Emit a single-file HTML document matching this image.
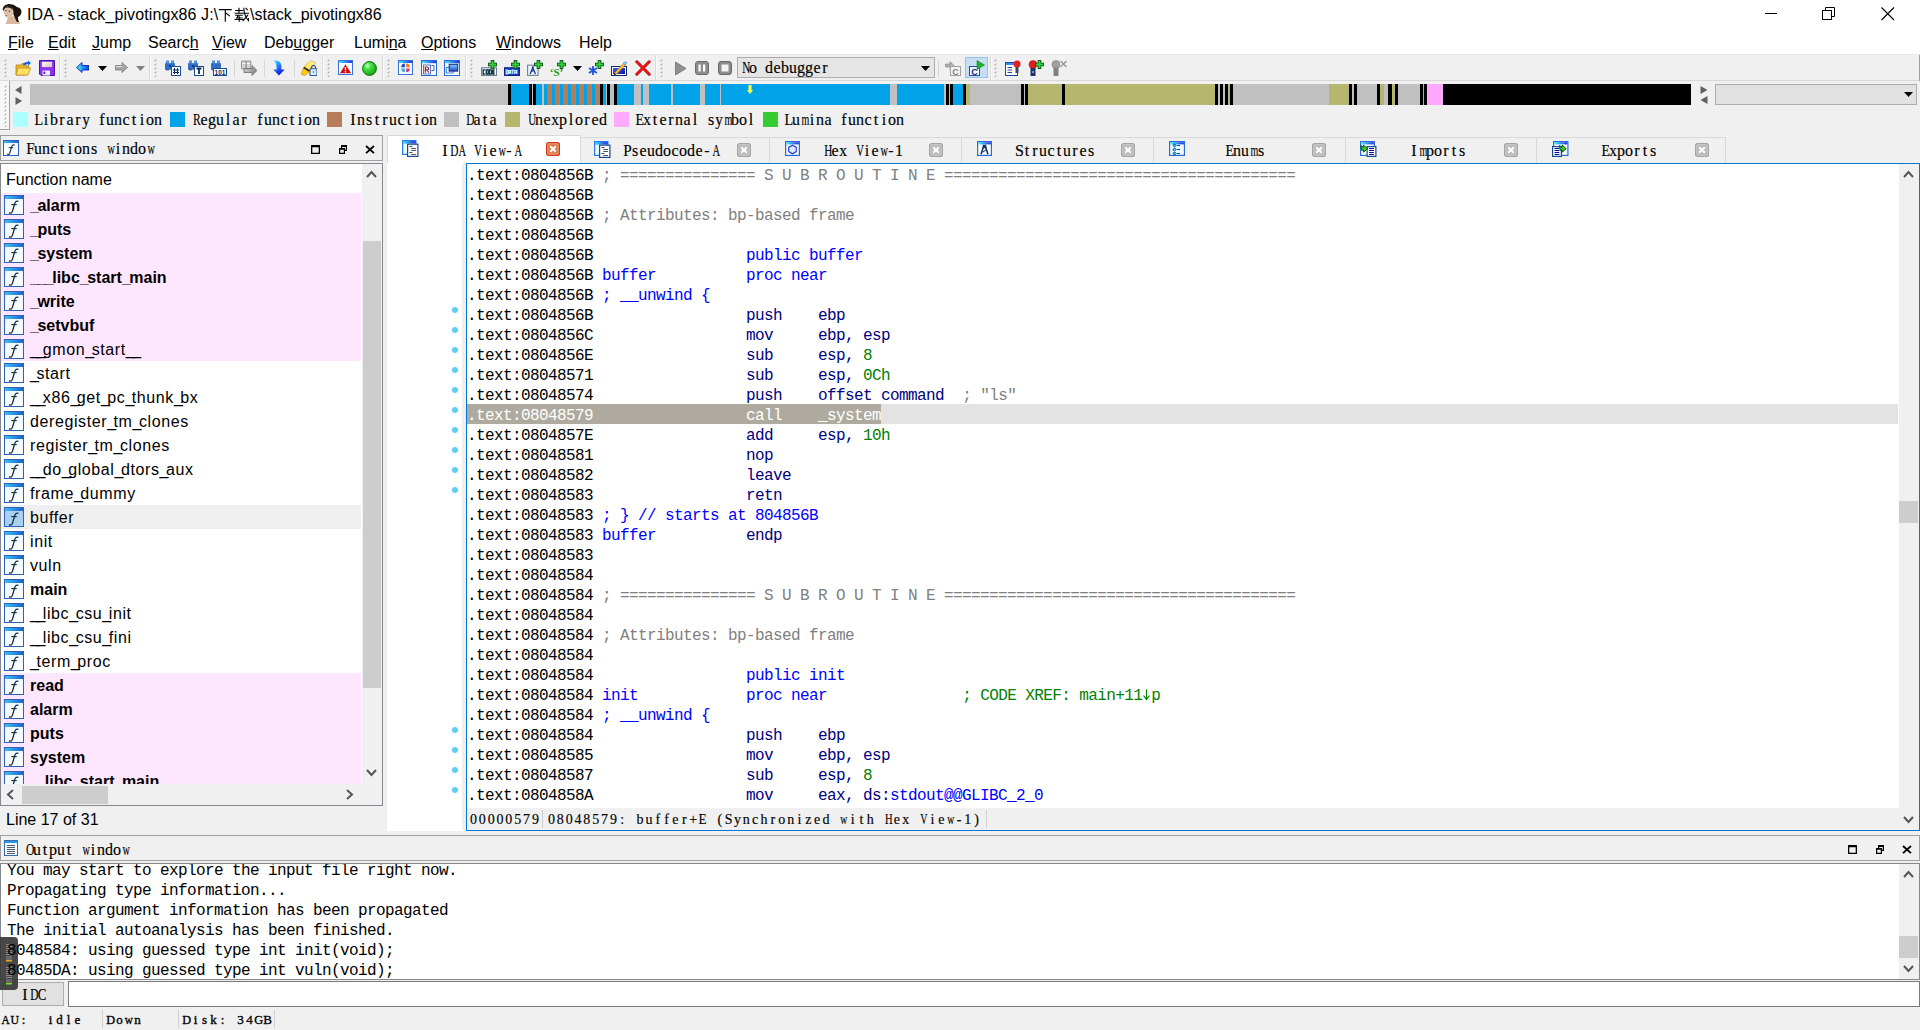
<!DOCTYPE html><html><head><meta charset="utf-8"><style>
html,body{margin:0;padding:0;width:1920px;height:1030px;overflow:hidden;background:#f0f0f0;}
.a{position:absolute;}
.t{position:absolute;white-space:pre;line-height:40px;}
pre{margin:0;}
</style></head><body>
<div class="a" style="left:0px;top:0px;width:1920px;height:55px;background:#ffffff;"></div>
<div class="a" style="left:0px;top:54px;width:1920px;height:1px;background:#e8e8e8;"></div>
<svg class="a" style="left:0px;top:0px;" width="28" height="28" viewBox="0 0 28 28" preserveAspectRatio="none">
<path d="M8 17 L13 16 Q16 19 19.5 22 L20 24 L5.5 24 Q7 21 8 17 Z" fill="#d6b9a0"/>
<path d="M2.6 9.5 Q3 5 7.5 4.2 Q13 3.5 17 7 Q21.5 8 21.5 12 Q21 16 18 17 Q18 20 19 22 L17 22 Q14.5 18 13 13 Q12 8 8 6.5 Q5 7 4 11 Z" fill="#1c120c"/>
<ellipse cx="8.6" cy="12" rx="4.9" ry="6" fill="#dcc2aa"/>
<path d="M4.5 8.5 Q6 5.5 10 6 Q12.5 7 13 10 Q11 7.5 8 7.5 Q6 7.5 4.5 8.5 Z" fill="#2a1a10"/>
<ellipse cx="5.8" cy="10.6" rx="1" ry="0.6" fill="#6a5040"/><ellipse cx="9.4" cy="11.2" rx="1" ry="0.6" fill="#6a5040"/>
<ellipse cx="6.3" cy="15.4" rx="1" ry="0.5" fill="#c05a40"/>
</svg>
<div class="t" style="left:27px;top:-5px;font-family:'Liberation Sans';font-size:16px;font-weight:normal;letter-spacing:0px;color:#000;letter-spacing:0.1px">IDA - stack_pivotingx86 J:\</div>
<svg class="a" style="left:218px;top:7px;" width="31" height="15" viewBox="0 0 34 17" preserveAspectRatio="none">
<g stroke="#000" stroke-width="1.25" fill="none" stroke-linecap="square">
<path d="M1.5 3 H14.5 M8 3 V16 M8.8 7 L12.5 10"/>
<g transform="translate(18,0)">
<path d="M1.5 4 H9 M5 1.5 V6.5 M0.8 7 H15.5 M1.5 9.3 H8.5 M4.5 9.3 L2.5 12.5 H8.5 M5.3 11 V16 M0.8 14.2 H9.3 M10.3 1.5 Q10.5 10 15.5 15.5 V13 M14.5 9.5 L9.5 15.5 M12.8 1.5 L14.2 3"/>
</g></g></svg>
<div class="t" style="left:250px;top:-5px;font-family:'Liberation Sans';font-size:16px;font-weight:normal;letter-spacing:0px;color:#000;">\stack_pivotingx86</div>
<div class="a" style="left:1765px;top:13px;width:12px;height:1px;background:#000;"></div>
<svg class="a" style="left:1822px;top:7px;" width="14" height="14" viewBox="0 0 14 14" preserveAspectRatio="none"><rect x="0.5" y="3.5" width="9" height="9" fill="none" stroke="#000"/><path d="M3.5 3.5 V0.5 H12.5 V9.5 H9.5" fill="none" stroke="#000"/></svg>
<svg class="a" style="left:1881px;top:7px;" width="14" height="14" viewBox="0 0 14 14" preserveAspectRatio="none"><path d="M0.5 0.5 L13 13 M13 0.5 L0.5 13" stroke="#000" stroke-width="1.1"/></svg>
<div class="t" style="left:8px;top:23px;font-family:'Liberation Sans';font-size:16px;font-weight:normal;letter-spacing:0px;color:#000;text-decoration-thickness:1px;text-underline-offset:1px"><u>F</u>ile</div>
<div class="t" style="left:48px;top:23px;font-family:'Liberation Sans';font-size:16px;font-weight:normal;letter-spacing:0px;color:#000;text-decoration-thickness:1px;text-underline-offset:1px"><u>E</u>dit</div>
<div class="t" style="left:92px;top:23px;font-family:'Liberation Sans';font-size:16px;font-weight:normal;letter-spacing:0px;color:#000;text-decoration-thickness:1px;text-underline-offset:1px"><u>J</u>ump</div>
<div class="t" style="left:148px;top:23px;font-family:'Liberation Sans';font-size:16px;font-weight:normal;letter-spacing:0px;color:#000;text-decoration-thickness:1px;text-underline-offset:1px">Searc<u>h</u></div>
<div class="t" style="left:212px;top:23px;font-family:'Liberation Sans';font-size:16px;font-weight:normal;letter-spacing:0px;color:#000;text-decoration-thickness:1px;text-underline-offset:1px"><u>V</u>iew</div>
<div class="t" style="left:264px;top:23px;font-family:'Liberation Sans';font-size:16px;font-weight:normal;letter-spacing:0px;color:#000;text-decoration-thickness:1px;text-underline-offset:1px">Deb<u>u</u>gger</div>
<div class="t" style="left:354px;top:23px;font-family:'Liberation Sans';font-size:16px;font-weight:normal;letter-spacing:0px;color:#000;text-decoration-thickness:1px;text-underline-offset:1px">Lumi<u>n</u>a</div>
<div class="t" style="left:421px;top:23px;font-family:'Liberation Sans';font-size:16px;font-weight:normal;letter-spacing:0px;color:#000;text-decoration-thickness:1px;text-underline-offset:1px"><u>O</u>ptions</div>
<div class="t" style="left:496px;top:23px;font-family:'Liberation Sans';font-size:16px;font-weight:normal;letter-spacing:0px;color:#000;text-decoration-thickness:1px;text-underline-offset:1px"><u>W</u>indows</div>
<div class="t" style="left:579px;top:23px;font-family:'Liberation Sans';font-size:16px;font-weight:normal;letter-spacing:0px;color:#000;text-decoration-thickness:1px;text-underline-offset:1px">Help</div>
<div class="a" style="left:0px;top:80px;width:1920px;height:1px;background:#d9d9d9;"></div>
<div class="a" style="left:1919px;top:55px;width:1px;height:26px;background:#a0a0a0;"></div>
<svg class="a" style="left:4px;top:59px;" width="3" height="18" viewBox="0 0 3 18" preserveAspectRatio="none"><path d="M0.7 2.3 L2.3 0.7" stroke="#a8a8a8" stroke-width="1.1"/><path d="M0.7 6.3 L2.3 4.7" stroke="#a8a8a8" stroke-width="1.1"/><path d="M0.7 10.3 L2.3 8.7" stroke="#a8a8a8" stroke-width="1.1"/><path d="M0.7 14.3 L2.3 12.7" stroke="#a8a8a8" stroke-width="1.1"/><path d="M0.7 18.3 L2.3 16.7" stroke="#a8a8a8" stroke-width="1.1"/></svg>
<svg class="a" style="left:64px;top:59px;" width="3" height="18" viewBox="0 0 3 18" preserveAspectRatio="none"><path d="M0.7 2.3 L2.3 0.7" stroke="#a8a8a8" stroke-width="1.1"/><path d="M0.7 6.3 L2.3 4.7" stroke="#a8a8a8" stroke-width="1.1"/><path d="M0.7 10.3 L2.3 8.7" stroke="#a8a8a8" stroke-width="1.1"/><path d="M0.7 14.3 L2.3 12.7" stroke="#a8a8a8" stroke-width="1.1"/><path d="M0.7 18.3 L2.3 16.7" stroke="#a8a8a8" stroke-width="1.1"/></svg>
<svg class="a" style="left:154px;top:59px;" width="3" height="18" viewBox="0 0 3 18" preserveAspectRatio="none"><path d="M0.7 2.3 L2.3 0.7" stroke="#a8a8a8" stroke-width="1.1"/><path d="M0.7 6.3 L2.3 4.7" stroke="#a8a8a8" stroke-width="1.1"/><path d="M0.7 10.3 L2.3 8.7" stroke="#a8a8a8" stroke-width="1.1"/><path d="M0.7 14.3 L2.3 12.7" stroke="#a8a8a8" stroke-width="1.1"/><path d="M0.7 18.3 L2.3 16.7" stroke="#a8a8a8" stroke-width="1.1"/></svg>
<svg class="a" style="left:327px;top:59px;" width="3" height="18" viewBox="0 0 3 18" preserveAspectRatio="none"><path d="M0.7 2.3 L2.3 0.7" stroke="#a8a8a8" stroke-width="1.1"/><path d="M0.7 6.3 L2.3 4.7" stroke="#a8a8a8" stroke-width="1.1"/><path d="M0.7 10.3 L2.3 8.7" stroke="#a8a8a8" stroke-width="1.1"/><path d="M0.7 14.3 L2.3 12.7" stroke="#a8a8a8" stroke-width="1.1"/><path d="M0.7 18.3 L2.3 16.7" stroke="#a8a8a8" stroke-width="1.1"/></svg>
<svg class="a" style="left:387px;top:59px;" width="3" height="18" viewBox="0 0 3 18" preserveAspectRatio="none"><path d="M0.7 2.3 L2.3 0.7" stroke="#a8a8a8" stroke-width="1.1"/><path d="M0.7 6.3 L2.3 4.7" stroke="#a8a8a8" stroke-width="1.1"/><path d="M0.7 10.3 L2.3 8.7" stroke="#a8a8a8" stroke-width="1.1"/><path d="M0.7 14.3 L2.3 12.7" stroke="#a8a8a8" stroke-width="1.1"/><path d="M0.7 18.3 L2.3 16.7" stroke="#a8a8a8" stroke-width="1.1"/></svg>
<svg class="a" style="left:470px;top:59px;" width="3" height="18" viewBox="0 0 3 18" preserveAspectRatio="none"><path d="M0.7 2.3 L2.3 0.7" stroke="#a8a8a8" stroke-width="1.1"/><path d="M0.7 6.3 L2.3 4.7" stroke="#a8a8a8" stroke-width="1.1"/><path d="M0.7 10.3 L2.3 8.7" stroke="#a8a8a8" stroke-width="1.1"/><path d="M0.7 14.3 L2.3 12.7" stroke="#a8a8a8" stroke-width="1.1"/><path d="M0.7 18.3 L2.3 16.7" stroke="#a8a8a8" stroke-width="1.1"/></svg>
<svg class="a" style="left:660px;top:59px;" width="3" height="18" viewBox="0 0 3 18" preserveAspectRatio="none"><path d="M0.7 2.3 L2.3 0.7" stroke="#a8a8a8" stroke-width="1.1"/><path d="M0.7 6.3 L2.3 4.7" stroke="#a8a8a8" stroke-width="1.1"/><path d="M0.7 10.3 L2.3 8.7" stroke="#a8a8a8" stroke-width="1.1"/><path d="M0.7 14.3 L2.3 12.7" stroke="#a8a8a8" stroke-width="1.1"/><path d="M0.7 18.3 L2.3 16.7" stroke="#a8a8a8" stroke-width="1.1"/></svg>
<svg class="a" style="left:994px;top:59px;" width="3" height="18" viewBox="0 0 3 18" preserveAspectRatio="none"><path d="M0.7 2.3 L2.3 0.7" stroke="#a8a8a8" stroke-width="1.1"/><path d="M0.7 6.3 L2.3 4.7" stroke="#a8a8a8" stroke-width="1.1"/><path d="M0.7 10.3 L2.3 8.7" stroke="#a8a8a8" stroke-width="1.1"/><path d="M0.7 14.3 L2.3 12.7" stroke="#a8a8a8" stroke-width="1.1"/><path d="M0.7 18.3 L2.3 16.7" stroke="#a8a8a8" stroke-width="1.1"/></svg>
<div class="a" style="left:59px;top:55px;width:1px;height:25px;background:#dadada;"></div>
<div class="a" style="left:60px;top:55px;width:1px;height:25px;background:#fbfbfb;"></div>
<div class="a" style="left:149px;top:55px;width:1px;height:25px;background:#dadada;"></div>
<div class="a" style="left:150px;top:55px;width:1px;height:25px;background:#fbfbfb;"></div>
<div class="a" style="left:322px;top:55px;width:1px;height:25px;background:#dadada;"></div>
<div class="a" style="left:323px;top:55px;width:1px;height:25px;background:#fbfbfb;"></div>
<div class="a" style="left:382px;top:55px;width:1px;height:25px;background:#dadada;"></div>
<div class="a" style="left:383px;top:55px;width:1px;height:25px;background:#fbfbfb;"></div>
<div class="a" style="left:465px;top:55px;width:1px;height:25px;background:#dadada;"></div>
<div class="a" style="left:466px;top:55px;width:1px;height:25px;background:#fbfbfb;"></div>
<div class="a" style="left:655px;top:55px;width:1px;height:25px;background:#dadada;"></div>
<div class="a" style="left:656px;top:55px;width:1px;height:25px;background:#fbfbfb;"></div>
<div class="a" style="left:990px;top:55px;width:1px;height:25px;background:#dadada;"></div>
<div class="a" style="left:991px;top:55px;width:1px;height:25px;background:#fbfbfb;"></div>
<div class="a" style="left:234px;top:60px;width:1px;height:17px;background:#d6d6d6;"></div>
<div class="a" style="left:264px;top:60px;width:1px;height:17px;background:#d6d6d6;"></div>
<div class="a" style="left:294px;top:60px;width:1px;height:17px;background:#d6d6d6;"></div>
<div class="a" style="left:938px;top:60px;width:1px;height:17px;background:#d6d6d6;"></div>
<svg class="a" style="left:15px;top:60px;" width="16" height="16" viewBox="0 0 16 16" preserveAspectRatio="none"><path d="M1 5 H6 L7 3.5 H11 V6 H14 L12 15 H1 Z" fill="#e8b830" stroke="#b08010" stroke-width="0.8"/>
<path d="M3 8 H15.5 L13 15 H1 Z" fill="#ffe060" stroke="#c09020" stroke-width="0.8"/>
<path d="M8 5 Q9 1.5 13 2 V0.5 L16 3 L13 5.5 V4 Q10 4 9 6" fill="#1a5fe0"/></svg>
<svg class="a" style="left:39px;top:60px;" width="16" height="16" viewBox="0 0 16 16" preserveAspectRatio="none"><defs><linearGradient id="sv" x1="0" y1="0" x2="1" y2="1"><stop offset="0" stop-color="#fff"/><stop offset="1" stop-color="#e0b8c0"/></linearGradient></defs>
<path d="M0.5 0.5 H15.5 V15.5 H2 L0.5 14 Z" fill="#8a30f0" stroke="#4a10b0"/>
<rect x="2.5" y="1.5" width="11" height="6" fill="url(#sv)" stroke="#5a20c0" stroke-width="0.5"/><rect x="3.5" y="10.5" width="7.5" height="5" fill="#eef0ff"/><rect x="4.5" y="11.5" width="1.8" height="2.5" fill="#5020b0"/></svg>
<svg class="a" style="left:76px;top:62px;" width="13" height="11" viewBox="0 0 13 11" preserveAspectRatio="none"><defs><linearGradient id="bk" x1="0" y1="0" x2="1" y2="0"><stop offset="0" stop-color="#40f0ff"/><stop offset="1" stop-color="#1040e0"/></linearGradient></defs><path d="M0.5 5.5 L6 0.5 V3.5 H13 V8 H6 V10.5 Z" fill="url(#bk)" stroke="#0a20c0" stroke-width="0.9"/></svg>
<svg class="a" style="left:98px;top:66px;" width="9" height="5" viewBox="0 0 9 5" preserveAspectRatio="none"><path d="M0 0 H9 L4.5 5 Z" fill="#000"/></svg>
<svg class="a" style="left:115px;top:62px;" width="13" height="11" viewBox="0 0 13 11" preserveAspectRatio="none"><path d="M12.5 5.5 L7 0.5 V3.5 H0.5 V8 H7 V10.5 Z" fill="#a8a8a8" stroke="#707070" stroke-width="0.7"/><path d="M1 4.5 H7" stroke="#e0e0e0" stroke-width="1"/></svg>
<svg class="a" style="left:136px;top:66px;" width="9" height="5" viewBox="0 0 9 5" preserveAspectRatio="none"><path d="M0 0 H9 L4.5 5 Z" fill="#808080"/></svg>
<svg class="a" style="left:165px;top:60px;" width="16" height="16" viewBox="0 0 16 16" preserveAspectRatio="none"><rect x="0.5" y="3" width="4" height="7" rx="1" fill="#2a70d0" stroke="#0a3a90" stroke-width="0.6"/><rect x="5.5" y="3" width="4" height="7" rx="1" fill="#2a70d0" stroke="#0a3a90" stroke-width="0.6"/>
<rect x="1" y="0.5" width="3" height="3" fill="#5090e0"/><rect x="6" y="0.5" width="3" height="3" fill="#5090e0"/><rect x="4" y="5" width="2" height="2" fill="#0a3a90"/>
<rect x="6.5" y="6.5" width="9" height="9" fill="#fff" stroke="#1a4a90"/><path d="M9.5 8 V14 M12.5 8 V14 M8 10 H14 M8 12.5 H14" stroke="#0a2a70" stroke-width="1.1"/></svg>
<svg class="a" style="left:188px;top:60px;" width="16" height="16" viewBox="0 0 16 16" preserveAspectRatio="none"><rect x="0.5" y="3" width="4" height="7" rx="1" fill="#2a70d0" stroke="#0a3a90" stroke-width="0.6"/><rect x="5.5" y="3" width="4" height="7" rx="1" fill="#2a70d0" stroke="#0a3a90" stroke-width="0.6"/>
<rect x="1" y="0.5" width="3" height="3" fill="#5090e0"/><rect x="6" y="0.5" width="3" height="3" fill="#5090e0"/><rect x="4" y="5" width="2" height="2" fill="#0a3a90"/>
<rect x="6.5" y="6.5" width="9" height="9" fill="#fff" stroke="#1a4a90"/><path d="M8.5 8.5 H13.5 M11 8.5 V14" stroke="#0a2a70" stroke-width="1.8"/></svg>
<svg class="a" style="left:211px;top:60px;" width="16" height="16" viewBox="0 0 16 16" preserveAspectRatio="none"><rect x="0.5" y="3" width="4" height="7" rx="1" fill="#2a70d0" stroke="#0a3a90" stroke-width="0.6"/><rect x="5.5" y="3" width="4" height="7" rx="1" fill="#2a70d0" stroke="#0a3a90" stroke-width="0.6"/>
<rect x="1" y="0.5" width="3" height="3" fill="#5090e0"/><rect x="6" y="0.5" width="3" height="3" fill="#5090e0"/>
<rect x="2.5" y="8.5" width="13" height="7" fill="#fff" stroke="#1a4a90"/><text x="9" y="14.6" font-family="Liberation Sans" font-weight="bold" font-size="6.5" text-anchor="middle" fill="#0a2a70">101</text></svg>
<svg class="a" style="left:241px;top:60px;" width="16" height="16" viewBox="0 0 16 16" preserveAspectRatio="none"><rect x="0.5" y="1" width="4.6" height="8" rx="0.8" fill="#d4d4d4" stroke="#7a7a7a" stroke-width="0.8"/><rect x="5.2" y="1" width="4.6" height="8" rx="0.8" fill="#d4d4d4" stroke="#7a7a7a" stroke-width="0.8"/>
<path d="M1.2 3.5 H4.5 M5.8 3.5 H9" stroke="#fff" stroke-width="0.8"/>
<defs><linearGradient id="ga" x1="0" y1="0" x2="1" y2="0"><stop offset="0" stop-color="#c8c8c8"/><stop offset="1" stop-color="#888"/></linearGradient></defs>
<path d="M3 8.5 H11 V5.5 L16 10.5 L11 15.5 V12.5 H3 Z" fill="url(#ga)" stroke="#6a6a6a" stroke-width="0.8"/></svg>
<svg class="a" style="left:273px;top:60px;" width="12" height="16" viewBox="0 0 12 16" preserveAspectRatio="none"><defs><linearGradient id="gd" x1="0" y1="0" x2="0.6" y2="1"><stop offset="0" stop-color="#30f0ff"/><stop offset="0.45" stop-color="#2a80ff"/><stop offset="1" stop-color="#0010e0"/></linearGradient></defs>
<path d="M0.8 0.6 Q8 0.2 8.3 6 V9.5 H11.6 L5.9 15.4 L0.2 9.5 H3.6 V6.5 Q3.6 3 0.8 0.6 Z" fill="url(#gd)"/></svg>
<svg class="a" style="left:301px;top:60px;" width="16" height="16" viewBox="0 0 16 16" preserveAspectRatio="none"><defs><linearGradient id="gh" x1="0" y1="0" x2="1" y2="0"><stop offset="0" stop-color="#ffe040"/><stop offset="1" stop-color="#fff4b0"/></linearGradient></defs>
<path d="M3 6.8 L9.5 0.6 L15 3 L9 10.5 Z" fill="url(#gh)" stroke="#e0a020" stroke-width="0.5"/>
<path d="M3 6.8 L9 10.5 L8 12 L2.2 8.2 Z" fill="#102020"/>
<path d="M2.2 8.2 L8 12 L4 15.4 L0.3 14.2 Z" fill="#ffd000" stroke="#e07010" stroke-width="0.6"/>
<rect x="9" y="8.8" width="7" height="6.8" rx="0.6" fill="#e0eef8" stroke="#2a5a90" stroke-width="1.1"/><path d="M10.5 8.8 V6.8 Q12.5 4 14.5 6.8 V8.8" fill="none" stroke="#2a5a90" stroke-width="1.2"/><circle cx="12.5" cy="12" r="0.8" fill="#2a5a90"/></svg>
<svg class="a" style="left:338px;top:60px;" width="15" height="15" viewBox="0 0 16 16" preserveAspectRatio="none"><defs><linearGradient id="wg" x1="0" y1="0" x2="1" y2="0"><stop offset="0" stop-color="#40e8ff"/><stop offset="1" stop-color="#2a30d8"/></linearGradient></defs><rect x="0.5" y="0.5" width="15" height="15" fill="#f6fdff" stroke="#2a6ad8" stroke-width="1"/><rect x="1" y="1" width="14" height="2.2" fill="url(#wg)"/><path d="M8 4.5 L14 14 H2 Z" fill="#d01010"/><rect x="7.3" y="7.5" width="1.4" height="3.5" fill="#fff"/><rect x="7.3" y="11.8" width="1.4" height="1.4" fill="#fff"/></svg>
<svg class="a" style="left:362px;top:61px;" width="15" height="15" viewBox="0 0 15 15" preserveAspectRatio="none"><defs><radialGradient id="gb" cx="0.35" cy="0.3" r="0.75"><stop offset="0" stop-color="#c8ffc8"/><stop offset="0.35" stop-color="#40e040"/><stop offset="1" stop-color="#10a010"/></radialGradient></defs><circle cx="7.5" cy="7.5" r="6.9" fill="url(#gb)" stroke="#0a6a0a" stroke-width="1"/></svg>
<svg class="a" style="left:398px;top:60px;" width="15" height="15" viewBox="0 0 16 16" preserveAspectRatio="none"><defs><linearGradient id="wg" x1="0" y1="0" x2="1" y2="0"><stop offset="0" stop-color="#40e8ff"/><stop offset="1" stop-color="#2a30d8"/></linearGradient></defs><rect x="0.5" y="0.5" width="15" height="15" fill="#f6fdff" stroke="#2a6ad8" stroke-width="1"/><rect x="1" y="1" width="14" height="2.2" fill="url(#wg)"/><path d="M7.3 7.7 V3.8 A4 4 0 0 0 3.4 7.7 Z" fill="#2a40e0"/><path d="M8.7 7.7 V3.8 A4 4 0 0 1 12.6 7.7 Z" fill="#f07a10"/><path d="M7.3 9.1 V13 A4 4 0 0 1 3.4 9.1 Z" fill="#30b0f0"/><path d="M8.7 9.1 V13 A4 4 0 0 0 12.6 9.1 Z" fill="#e02a80"/></svg>
<svg class="a" style="left:421px;top:60px;" width="16" height="16" viewBox="0 0 16 16" preserveAspectRatio="none"><defs><linearGradient id="wg" x1="0" y1="0" x2="1" y2="0"><stop offset="0" stop-color="#40e8ff"/><stop offset="1" stop-color="#2a30d8"/></linearGradient></defs><rect x="0.5" y="0.5" width="15" height="15" fill="#f6fdff" stroke="#2a6ad8" stroke-width="1"/><rect x="1" y="1" width="14" height="2.2" fill="url(#wg)"/><rect x="2.5" y="5" width="7" height="9" fill="#fff" stroke="#3a6ac0" stroke-width="0.9"/><path d="M4.3 12.8 V7 H6.3 Q7.6 7 7.6 8.4 Q7.6 9.8 6.3 9.8 H4.3 M6 9.8 L7.8 12.8" fill="none" stroke="#902040" stroke-width="1.2"/><path d="M10.5 5.5 H13 V10.5 H10.5" fill="none" stroke="#3a6ac0" stroke-width="1"/></svg>
<svg class="a" style="left:444px;top:60px;" width="16" height="16" viewBox="0 0 16 16" preserveAspectRatio="none"><defs><linearGradient id="wg" x1="0" y1="0" x2="1" y2="0"><stop offset="0" stop-color="#40e8ff"/><stop offset="1" stop-color="#2a30d8"/></linearGradient></defs><rect x="0.5" y="0.5" width="15" height="15" fill="#f6fdff" stroke="#2a6ad8" stroke-width="1"/><rect x="1" y="1" width="14" height="2.2" fill="url(#wg)"/><defs><linearGradient id="w2g" x1="0" y1="0" x2="0" y2="1"><stop offset="0" stop-color="#80d0ff"/><stop offset="1" stop-color="#2050c0"/></linearGradient></defs><rect x="2.2" y="7.5" width="7" height="5.5" fill="#e0f0ff" stroke="#3a7ad8" stroke-width="0.9"/><rect x="5.2" y="4.3" width="8.5" height="6.8" fill="url(#w2g)" stroke="#102a80" stroke-width="1"/></svg>
<svg class="a" style="left:481px;top:60px;" width="16" height="16" viewBox="0 0 16 16" preserveAspectRatio="none"><rect x="0.6" y="7.8" width="15" height="7.6" fill="#f4f8ff" stroke="#687888" stroke-width="1.1"/><path d="M3.8 10 H2.2 V14 H3.8 M5.2 10 H7.2 V14 H5.2 Z M8.6 10 H10 L10.8 10.8 V13.2 L10 14 H8.6 Z M13.6 10 H12 V14 H13.6 M12 12 H13.4" fill="none" stroke="#0a3040" stroke-width="1.3"/><path d="M7 4.5 H16 M11.5 0 V9" stroke="#0a4a0a" stroke-width="3.6"/><path d="M7.8 4.5 H15.2 M11.5 0.8 V8.2" stroke="#30d040" stroke-width="2"/></svg>
<svg class="a" style="left:504px;top:60px;" width="16" height="16" viewBox="0 0 16 16" preserveAspectRatio="none"><rect x="0.6" y="7.8" width="15" height="7.6" fill="#1a40d0" stroke="#0a1a80" stroke-width="1.1"/><path d="M2.2 10 H3.4 L4 10.8 V13.2 L3.4 14 H2.2 Z M5 14 V10.5 H6.8 V14 M5 12.3 H6.8 M7.6 10 H10 M8.8 10 V14 M10.8 14 V10.5 H12.8 V14 M10.8 12.3 H12.8" fill="none" stroke="#c8f8ff" stroke-width="1.2"/><path d="M7 4.5 H16 M11.5 0 V9" stroke="#0a4a0a" stroke-width="3.6"/><path d="M7.8 4.5 H15.2 M11.5 0.8 V8.2" stroke="#30d040" stroke-width="2"/></svg>
<svg class="a" style="left:527px;top:60px;" width="16" height="16" viewBox="0 0 16 16" preserveAspectRatio="none"><rect x="0.6" y="5.2" width="10.5" height="10.2" fill="#eef4ff" stroke="#708090" stroke-width="1.1"/><path d="M3.2 14 L5.8 7.5 L8.4 14 M4.3 11.5 L7 10.5" fill="none" stroke="#1a3a80" stroke-width="1.3"/><circle cx="5.8" cy="7.2" r="0.9" fill="#1a3a80"/><path d="M7 4.5 H16 M11.5 0 V9" stroke="#0a4a0a" stroke-width="3.6"/><path d="M7.8 4.5 H15.2 M11.5 0.8 V8.2" stroke="#30d040" stroke-width="2"/></svg>
<svg class="a" style="left:550px;top:60px;" width="16" height="16" viewBox="0 0 16 16" preserveAspectRatio="none"><text x="6.5" y="15.5" font-family="Liberation Serif" font-weight="bold" font-size="11" text-anchor="middle" fill="#2a9a10">‘S’</text><path d="M7 4.5 H16 M11.5 0 V9" stroke="#0a4a0a" stroke-width="3.6"/><path d="M7.8 4.5 H15.2 M11.5 0.8 V8.2" stroke="#30d040" stroke-width="2"/></svg>
<svg class="a" style="left:573px;top:66px;" width="9" height="5" viewBox="0 0 9 5" preserveAspectRatio="none"><path d="M0 0 H9 L4.5 5 Z" fill="#000"/></svg>
<svg class="a" style="left:588px;top:60px;" width="16" height="16" viewBox="0 0 16 16" preserveAspectRatio="none"><path d="M5 6 V15 M1 8 L9 13 M9 8 L1 13" stroke="#2050e0" stroke-width="1.8"/><path d="M7 4.5 H16 M11.5 0 V9" stroke="#0a4a0a" stroke-width="3.6"/><path d="M7.8 4.5 H15.2 M11.5 0.8 V8.2" stroke="#30d040" stroke-width="2"/></svg>
<svg class="a" style="left:611px;top:60px;" width="16" height="16" viewBox="0 0 16 16" preserveAspectRatio="none"><defs><linearGradient id="pg" x1="0" y1="0" x2="1" y2="1"><stop offset="0" stop-color="#3a60f0"/><stop offset="1" stop-color="#1010a0"/></linearGradient></defs><rect x="0.5" y="6.5" width="15" height="9" fill="#fff" stroke="#0a2a70"/><rect x="2" y="8" width="12" height="6" fill="url(#pg)"/><path d="M3.5 13 L12.5 3.2 L14.3 4.9 L5.2 14.6 Z" fill="#f8c030" stroke="#b07010" stroke-width="0.6"/><path d="M12.5 3.2 L13.8 1.8 Q15 1.3 15.6 2.4 Q15.9 3.3 14.3 4.9 Z" fill="#a0d8ff" stroke="#3070b0" stroke-width="0.6"/><path d="M2.8 15.2 L3.5 13 L5.2 14.6 Z" fill="#202020"/></svg>
<svg class="a" style="left:635px;top:60px;" width="16" height="16" viewBox="0 0 16 16" preserveAspectRatio="none"><path d="M1.8 1.8 L14.2 14.2 M14.2 1.8 L1.8 14.2" stroke="#b00000" stroke-width="3" stroke-linecap="round"/><path d="M1.8 1.8 L14.2 14.2 M14.2 1.8 L1.8 14.2" stroke="#f01818" stroke-width="1.8" stroke-linecap="round"/></svg>
<svg class="a" style="left:674px;top:61px;" width="13" height="15" viewBox="0 0 13 15" preserveAspectRatio="none"><path d="M1.5 1 L12 7.5 L1.5 14 Z" fill="#909090" stroke="#707070" stroke-width="0.8"/></svg>
<svg class="a" style="left:695px;top:61px;" width="14" height="14" viewBox="0 0 14 14" preserveAspectRatio="none"><rect x="0.5" y="0.5" width="13" height="13" rx="2.5" fill="#8c8c8c" stroke="#6a6a6a"/><rect x="3.5" y="3.5" width="2.2" height="7" fill="#fff"/><rect x="8" y="3.5" width="2.2" height="7" fill="#fff"/></svg>
<svg class="a" style="left:718px;top:61px;" width="14" height="14" viewBox="0 0 14 14" preserveAspectRatio="none"><rect x="0.5" y="0.5" width="13" height="13" rx="2.5" fill="#8c8c8c" stroke="#6a6a6a"/><rect x="3.5" y="3.5" width="7" height="7" fill="#f4f4f4"/></svg>
<div class="a" style="left:737px;top:57px;width:198px;height:21px;background:#e5e5e5;box-sizing:border-box;border:1px solid #adadad;"></div>
<div class="t" style="left:741px;top:48px;font-family:'Liberation Serif';font-size:16px;color:#000;-webkit-text-stroke:0.15px #000;"><span style="display:inline-block;width:8px;text-align:center;transform:scaleX(0.690);">N</span><span style="display:inline-block;width:8px;text-align:center;">o</span><span style="display:inline-block;width:8px">&nbsp;</span><span style="display:inline-block;width:8px;text-align:center;">d</span><span style="display:inline-block;width:8px;text-align:center;">e</span><span style="display:inline-block;width:8px;text-align:center;">b</span><span style="display:inline-block;width:8px;text-align:center;transform:scaleX(0.984);">u</span><span style="display:inline-block;width:8px;text-align:center;">g</span><span style="display:inline-block;width:8px;text-align:center;">g</span><span style="display:inline-block;width:8px;text-align:center;">e</span><span style="display:inline-block;width:8px;text-align:center;">r</span></div>
<svg class="a" style="left:921px;top:66px;" width="9" height="5" viewBox="0 0 9 5" preserveAspectRatio="none"><path d="M0 0 H9 L4.5 5 Z" fill="#000"/></svg>
<svg class="a" style="left:945px;top:60px;" width="16" height="16" viewBox="0 0 16 16" preserveAspectRatio="none"><path d="M0.5 4 H5 V1.5 L9 5.5 L5 9.5 V7 H0.5 Z" fill="#b0b0b0" stroke="#808080" stroke-width="0.6"/><rect x="5.5" y="6.5" width="10" height="9" fill="#f4f4f4" stroke="#a0a0a0"/><text x="10.5" y="14.5" font-family="Liberation Sans" font-weight="bold" font-size="9" text-anchor="middle" fill="#808080">C</text></svg>
<div class="a" style="left:965px;top:57px;width:23px;height:21px;background:#c6def2;box-sizing:border-box;border:1px solid #90c4ee;"></div>
<svg class="a" style="left:969px;top:60px;" width="16" height="16" viewBox="0 0 16 16" preserveAspectRatio="none"><rect x="0.5" y="6.5" width="10" height="9" fill="#f4f8ff" stroke="#2050a0"/><text x="5.5" y="14.5" font-family="Liberation Sans" font-weight="bold" font-size="9" text-anchor="middle" fill="#102a80">C</text><path d="M8 0.5 L15.5 5 L8 9.5 Z" fill="#20b030" stroke="#108020" stroke-width="0.6"/></svg>
<svg class="a" style="left:1005px;top:60px;" width="16" height="16" viewBox="0 0 16 16" preserveAspectRatio="none"><rect x="0.5" y="2.5" width="12" height="13" fill="#fff" stroke="#1a4aa0"/><rect x="1" y="3" width="11" height="2" fill="#3a8ae8"/><path d="M2.5 7.5 H7 M2.5 10 H7 M2.5 12.5 H7" stroke="#2a4a90"/><circle cx="12" cy="4" r="3.5" fill="#e02020"/><rect x="10.5" y="7" width="3" height="6" fill="#404860"/></svg>
<svg class="a" style="left:1028px;top:60px;" width="16" height="16" viewBox="0 0 16 16" preserveAspectRatio="none"><circle cx="5" cy="4.5" r="4" fill="#e02020" stroke="#a01010" stroke-width="0.5"/><rect x="2.5" y="8" width="5" height="8" fill="#20306a"/><rect x="4" y="11" width="2" height="2" fill="#8090c0"/><path d="M7 4.5 H16 M11.5 0 V9" stroke="#0a4a0a" stroke-width="3.6"/><path d="M7.8 4.5 H15.2 M11.5 0.8 V8.2" stroke="#30d040" stroke-width="2"/></svg>
<svg class="a" style="left:1051px;top:60px;" width="16" height="16" viewBox="0 0 16 16" preserveAspectRatio="none"><circle cx="5" cy="4.5" r="4" fill="#a0a0a0" stroke="#707070" stroke-width="0.5"/><rect x="2.5" y="8" width="5" height="8" fill="#808080"/><path d="M9.5 1 L15.5 7 M15.5 1 L9.5 7" stroke="#909090" stroke-width="1.2"/></svg>
<div class="a" style="left:0px;top:81px;width:10px;height:49px;background:#f7f7f7;"></div>
<div class="a" style="left:9px;top:81px;width:1px;height:49px;background:#a0a0a0;"></div>
<div class="a" style="left:0px;top:129px;width:10px;height:1px;background:#a0a0a0;"></div>
<svg class="a" style="left:4px;top:85px;" width="3" height="42" viewBox="0 0 3 42" preserveAspectRatio="none"><path d="M0.7 2.3 L2.3 0.7" stroke="#a8a8a8" stroke-width="1.1"/><path d="M0.7 6.3 L2.3 4.7" stroke="#a8a8a8" stroke-width="1.1"/><path d="M0.7 10.3 L2.3 8.7" stroke="#a8a8a8" stroke-width="1.1"/><path d="M0.7 14.3 L2.3 12.7" stroke="#a8a8a8" stroke-width="1.1"/><path d="M0.7 18.3 L2.3 16.7" stroke="#a8a8a8" stroke-width="1.1"/><path d="M0.7 22.3 L2.3 20.7" stroke="#a8a8a8" stroke-width="1.1"/><path d="M0.7 26.3 L2.3 24.7" stroke="#a8a8a8" stroke-width="1.1"/><path d="M0.7 30.3 L2.3 28.7" stroke="#a8a8a8" stroke-width="1.1"/><path d="M0.7 34.3 L2.3 32.7" stroke="#a8a8a8" stroke-width="1.1"/><path d="M0.7 38.3 L2.3 36.7" stroke="#a8a8a8" stroke-width="1.1"/><path d="M0.7 42.3 L2.3 40.7" stroke="#a8a8a8" stroke-width="1.1"/></svg>
<svg class="a" style="left:15px;top:86px;" width="7" height="19" viewBox="0 0 7 19" preserveAspectRatio="none"><path d="M6.5 0 V8 L0 4 Z" fill="#606060"/><path d="M0.5 11 V19 L7 15 Z" fill="#606060"/></svg>
<svg class="a" style="left:30px;top:84px;shape-rendering:crispEdges" width="1661" height="21" viewBox="0 0 1661 21" preserveAspectRatio="none"><rect x="0" y="0" width="477.5" height="21" fill="#c0c0c0"/><rect x="477.5" y="0" width="3.5" height="21" fill="#000000"/><rect x="481" y="0" width="18" height="21" fill="#00a2e8"/><rect x="499" y="0" width="3" height="21" fill="#000000"/><rect x="502" y="0" width="1" height="21" fill="#c0c0c0"/><rect x="503" y="0" width="3" height="21" fill="#000000"/><rect x="506" y="0" width="6" height="21" fill="#00a2e8"/><rect x="512" y="0" width="2" height="21" fill="#c0c0c0"/><rect x="514" y="0" width="3" height="21" fill="#00a2e8"/><rect x="517" y="0" width="5" height="21" fill="#b87c58"/><rect x="522" y="0" width="3" height="21" fill="#00a2e8"/><rect x="525" y="0" width="5" height="21" fill="#b87c58"/><rect x="530" y="0" width="3" height="21" fill="#00a2e8"/><rect x="533" y="0" width="5" height="21" fill="#b87c58"/><rect x="538" y="0" width="3" height="21" fill="#00a2e8"/><rect x="541" y="0" width="5" height="21" fill="#b87c58"/><rect x="546" y="0" width="3" height="21" fill="#00a2e8"/><rect x="549" y="0" width="5" height="21" fill="#b87c58"/><rect x="554" y="0" width="3" height="21" fill="#00a2e8"/><rect x="557" y="0" width="5" height="21" fill="#b87c58"/><rect x="562" y="0" width="3" height="21" fill="#00a2e8"/><rect x="565" y="0" width="5" height="21" fill="#b87c58"/><rect x="570" y="0" width="3" height="21" fill="#000000"/><rect x="573" y="0" width="3" height="21" fill="#00a2e8"/><rect x="576" y="0" width="1" height="21" fill="#c0c0c0"/><rect x="577" y="0" width="3" height="21" fill="#000000"/><rect x="580" y="0" width="4" height="21" fill="#c0c0c0"/><rect x="584" y="0" width="3" height="21" fill="#000000"/><rect x="587" y="0" width="17" height="21" fill="#00a2e8"/><rect x="604" y="0" width="7" height="21" fill="#c0c0c0"/><rect x="611" y="0" width="2" height="21" fill="#00a2e8"/><rect x="613" y="0" width="6" height="21" fill="#c0c0c0"/><rect x="619" y="0" width="22" height="21" fill="#00a2e8"/><rect x="641" y="0" width="2" height="21" fill="#c0c0c0"/><rect x="643" y="0" width="27" height="21" fill="#00a2e8"/><rect x="670" y="0" width="5" height="21" fill="#c0c0c0"/><rect x="675" y="0" width="15" height="21" fill="#00a2e8"/><rect x="690" y="0" width="1" height="21" fill="#c0c0c0"/><rect x="691" y="0" width="169" height="21" fill="#00a2e8"/><rect x="860" y="0" width="7" height="21" fill="#c0c0c0"/><rect x="867" y="0" width="47" height="21" fill="#00a2e8"/><rect x="914" y="0" width="2" height="21" fill="#c0c0c0"/><rect x="916" y="0" width="3" height="21" fill="#000000"/><rect x="919" y="0" width="1" height="21" fill="#c0c0c0"/><rect x="920" y="0" width="3" height="21" fill="#000000"/><rect x="923" y="0" width="10" height="21" fill="#00a2e8"/><rect x="933" y="0" width="3" height="21" fill="#000000"/><rect x="936" y="0" width="4" height="21" fill="#b6b66e"/><rect x="940" y="0" width="51" height="21" fill="#c0c0c0"/><rect x="991" y="0" width="3" height="21" fill="#000000"/><rect x="994" y="0" width="1" height="21" fill="#c0c0c0"/><rect x="995" y="0" width="3" height="21" fill="#000000"/><rect x="998" y="0" width="34" height="21" fill="#b6b66e"/><rect x="1032" y="0" width="3" height="21" fill="#000000"/><rect x="1035" y="0" width="150" height="21" fill="#b6b66e"/><rect x="1185" y="0" width="3" height="21" fill="#000000"/><rect x="1188" y="0" width="2" height="21" fill="#c0c0c0"/><rect x="1190" y="0" width="3" height="21" fill="#000000"/><rect x="1193" y="0" width="2" height="21" fill="#c0c0c0"/><rect x="1195" y="0" width="3" height="21" fill="#000000"/><rect x="1198" y="0" width="2" height="21" fill="#b6b66e"/><rect x="1200" y="0" width="3" height="21" fill="#000000"/><rect x="1203" y="0" width="96" height="21" fill="#c0c0c0"/><rect x="1299" y="0" width="20" height="21" fill="#b6b66e"/><rect x="1319" y="0" width="3" height="21" fill="#000000"/><rect x="1322" y="0" width="2" height="21" fill="#c0c0c0"/><rect x="1324" y="0" width="3" height="21" fill="#000000"/><rect x="1327" y="0" width="20" height="21" fill="#c0c0c0"/><rect x="1347" y="0" width="3" height="21" fill="#000000"/><rect x="1350" y="0" width="4" height="21" fill="#b6b66e"/><rect x="1354" y="0" width="4" height="21" fill="#c0c0c0"/><rect x="1358" y="0" width="4" height="21" fill="#000000"/><rect x="1362" y="0" width="3" height="21" fill="#b6b66e"/><rect x="1365" y="0" width="3" height="21" fill="#000000"/><rect x="1368" y="0" width="22" height="21" fill="#c0c0c0"/><rect x="1390" y="0" width="3" height="21" fill="#000000"/><rect x="1393" y="0" width="1" height="21" fill="#b6b66e"/><rect x="1394" y="0" width="3" height="21" fill="#000000"/><rect x="1397" y="0" width="16" height="21" fill="#ffa8ff"/><rect x="1413" y="0" width="248" height="21" fill="#000000"/></svg>
<svg class="a" style="left:747px;top:85px;" width="6" height="9" viewBox="0 0 6 9" preserveAspectRatio="none"><path d="M1.5 0 H4.5 V5 H6 L3 9 L0 5 H1.5 Z" fill="#ffff40"/></svg>
<svg class="a" style="left:1700px;top:86px;" width="8" height="19" viewBox="0 0 8 19" preserveAspectRatio="none"><path d="M0.5 0 V8 L7.5 4 Z" fill="#606060"/><path d="M7.5 10 V18 L0.5 14 Z" fill="#606060"/></svg>
<div class="a" style="left:1715px;top:84px;width:202px;height:21px;background:#e1e1e1;box-sizing:border-box;border:1px solid #adadad;"></div>
<svg class="a" style="left:1904px;top:92px;" width="9" height="5" viewBox="0 0 9 5" preserveAspectRatio="none"><path d="M0 0 H9 L4.5 5 Z" fill="#000"/></svg>
<div class="a" style="left:13px;top:112px;width:15px;height:15px;background:#aaffff;"></div>
<div class="t" style="left:34px;top:100px;font-family:'Liberation Serif';font-size:16px;color:#000;-webkit-text-stroke:0.15px #000;"><span style="display:inline-block;width:8px;text-align:center;transform:scaleX(0.886);">L</span><span style="display:inline-block;width:8px;text-align:center;">i</span><span style="display:inline-block;width:8px;text-align:center;">b</span><span style="display:inline-block;width:8px;text-align:center;">r</span><span style="display:inline-block;width:8px;text-align:center;">a</span><span style="display:inline-block;width:8px;text-align:center;">r</span><span style="display:inline-block;width:8px;text-align:center;transform:scaleX(0.956);">y</span><span style="display:inline-block;width:8px">&nbsp;</span><span style="display:inline-block;width:8px;text-align:center;">f</span><span style="display:inline-block;width:8px;text-align:center;transform:scaleX(0.984);">u</span><span style="display:inline-block;width:8px;text-align:center;">n</span><span style="display:inline-block;width:8px;text-align:center;">c</span><span style="display:inline-block;width:8px;text-align:center;">t</span><span style="display:inline-block;width:8px;text-align:center;">i</span><span style="display:inline-block;width:8px;text-align:center;">o</span><span style="display:inline-block;width:8px;text-align:center;">n</span></div>
<div class="a" style="left:170px;top:112px;width:15px;height:15px;background:#00a2e8;"></div>
<div class="t" style="left:192px;top:100px;font-family:'Liberation Serif';font-size:16px;color:#000;-webkit-text-stroke:0.15px #000;"><span style="display:inline-block;width:8px;text-align:center;transform:scaleX(0.726);">R</span><span style="display:inline-block;width:8px;text-align:center;">e</span><span style="display:inline-block;width:8px;text-align:center;">g</span><span style="display:inline-block;width:8px;text-align:center;transform:scaleX(0.984);">u</span><span style="display:inline-block;width:8px;text-align:center;">l</span><span style="display:inline-block;width:8px;text-align:center;">a</span><span style="display:inline-block;width:8px;text-align:center;">r</span><span style="display:inline-block;width:8px">&nbsp;</span><span style="display:inline-block;width:8px;text-align:center;">f</span><span style="display:inline-block;width:8px;text-align:center;transform:scaleX(0.984);">u</span><span style="display:inline-block;width:8px;text-align:center;">n</span><span style="display:inline-block;width:8px;text-align:center;">c</span><span style="display:inline-block;width:8px;text-align:center;">t</span><span style="display:inline-block;width:8px;text-align:center;">i</span><span style="display:inline-block;width:8px;text-align:center;">o</span><span style="display:inline-block;width:8px;text-align:center;">n</span></div>
<div class="a" style="left:327px;top:112px;width:15px;height:15px;background:#b87c58;"></div>
<div class="t" style="left:349px;top:100px;font-family:'Liberation Serif';font-size:16px;color:#000;-webkit-text-stroke:0.15px #000;"><span style="display:inline-block;width:8px;text-align:center;">I</span><span style="display:inline-block;width:8px;text-align:center;">n</span><span style="display:inline-block;width:8px;text-align:center;">s</span><span style="display:inline-block;width:8px;text-align:center;">t</span><span style="display:inline-block;width:8px;text-align:center;">r</span><span style="display:inline-block;width:8px;text-align:center;transform:scaleX(0.984);">u</span><span style="display:inline-block;width:8px;text-align:center;">c</span><span style="display:inline-block;width:8px;text-align:center;">t</span><span style="display:inline-block;width:8px;text-align:center;">i</span><span style="display:inline-block;width:8px;text-align:center;">o</span><span style="display:inline-block;width:8px;text-align:center;">n</span></div>
<div class="a" style="left:444px;top:112px;width:15px;height:15px;background:#c0c0c0;"></div>
<div class="t" style="left:465px;top:100px;font-family:'Liberation Serif';font-size:16px;color:#000;-webkit-text-stroke:0.15px #000;"><span style="display:inline-block;width:8px;text-align:center;transform:scaleX(0.708);">D</span><span style="display:inline-block;width:8px;text-align:center;">a</span><span style="display:inline-block;width:8px;text-align:center;">t</span><span style="display:inline-block;width:8px;text-align:center;">a</span></div>
<div class="a" style="left:505px;top:112px;width:15px;height:15px;background:#b6b66e;"></div>
<div class="t" style="left:527px;top:100px;font-family:'Liberation Serif';font-size:16px;color:#000;-webkit-text-stroke:0.15px #000;"><span style="display:inline-block;width:8px;text-align:center;transform:scaleX(0.680);">U</span><span style="display:inline-block;width:8px;text-align:center;">n</span><span style="display:inline-block;width:8px;text-align:center;">e</span><span style="display:inline-block;width:8px;text-align:center;transform:scaleX(0.966);">x</span><span style="display:inline-block;width:8px;text-align:center;">p</span><span style="display:inline-block;width:8px;text-align:center;">l</span><span style="display:inline-block;width:8px;text-align:center;">o</span><span style="display:inline-block;width:8px;text-align:center;">r</span><span style="display:inline-block;width:8px;text-align:center;">e</span><span style="display:inline-block;width:8px;text-align:center;">d</span></div>
<div class="a" style="left:614px;top:112px;width:15px;height:15px;background:#ffaaff;"></div>
<div class="t" style="left:635px;top:100px;font-family:'Liberation Serif';font-size:16px;color:#000;-webkit-text-stroke:0.15px #000;"><span style="display:inline-block;width:8px;text-align:center;transform:scaleX(0.869);">E</span><span style="display:inline-block;width:8px;text-align:center;transform:scaleX(0.966);">x</span><span style="display:inline-block;width:8px;text-align:center;">t</span><span style="display:inline-block;width:8px;text-align:center;">e</span><span style="display:inline-block;width:8px;text-align:center;">r</span><span style="display:inline-block;width:8px;text-align:center;">n</span><span style="display:inline-block;width:8px;text-align:center;">a</span><span style="display:inline-block;width:8px;text-align:center;">l</span><span style="display:inline-block;width:8px">&nbsp;</span><span style="display:inline-block;width:8px;text-align:center;">s</span><span style="display:inline-block;width:8px;text-align:center;transform:scaleX(0.956);">y</span><span style="display:inline-block;width:8px;text-align:center;transform:scaleX(0.624);">m</span><span style="display:inline-block;width:8px;text-align:center;">b</span><span style="display:inline-block;width:8px;text-align:center;">o</span><span style="display:inline-block;width:8px;text-align:center;">l</span></div>
<div class="a" style="left:763px;top:112px;width:15px;height:15px;background:#33cc33;"></div>
<div class="t" style="left:784px;top:100px;font-family:'Liberation Serif';font-size:16px;color:#000;-webkit-text-stroke:0.15px #000;"><span style="display:inline-block;width:8px;text-align:center;transform:scaleX(0.886);">L</span><span style="display:inline-block;width:8px;text-align:center;transform:scaleX(0.984);">u</span><span style="display:inline-block;width:8px;text-align:center;transform:scaleX(0.624);">m</span><span style="display:inline-block;width:8px;text-align:center;">i</span><span style="display:inline-block;width:8px;text-align:center;">n</span><span style="display:inline-block;width:8px;text-align:center;">a</span><span style="display:inline-block;width:8px">&nbsp;</span><span style="display:inline-block;width:8px;text-align:center;">f</span><span style="display:inline-block;width:8px;text-align:center;transform:scaleX(0.984);">u</span><span style="display:inline-block;width:8px;text-align:center;">n</span><span style="display:inline-block;width:8px;text-align:center;">c</span><span style="display:inline-block;width:8px;text-align:center;">t</span><span style="display:inline-block;width:8px;text-align:center;">i</span><span style="display:inline-block;width:8px;text-align:center;">o</span><span style="display:inline-block;width:8px;text-align:center;">n</span></div>
<svg class="a" width="0" height="0" style="left:0;top:0"><defs><linearGradient id="fg" x1="0" y1="0" x2="0" y2="1"><stop offset="0" stop-color="#e8f8ff"/><stop offset="1" stop-color="#ffffff"/></linearGradient>
<linearGradient id="fb" x1="0" y1="0" x2="1" y2="0"><stop offset="0" stop-color="#40c0f0"/><stop offset="1" stop-color="#2060d0"/></linearGradient></defs></svg>
<div class="a" style="left:0px;top:135px;width:383px;height:26px;background:#f0f0f0;box-sizing:border-box;border:1px solid #a0a0a0;"></div>
<svg class="a" style="left:3px;top:140px;" width="16" height="16" viewBox="0 0 16 16" preserveAspectRatio="none"><rect x="0.5" y="0.5" width="15" height="15" fill="url(#fg)" stroke="#2a62c0"/>
<rect x="1" y="1" width="14" height="2" fill="url(#fb)"/>
<path d="M11.52 5.12 Q9.28 4.16 8.48 7.2 L6.72 13.12 Q6.08 15.2 4.0 14.08" fill="none" stroke="#1a2a40" stroke-width="1.1"/>
<path d="M5.76 7.68 H10.24" stroke="#1a2a40" stroke-width="1"/></svg>
<div class="t" style="left:26px;top:129px;font-family:'Liberation Serif';font-size:16px;color:#000;-webkit-text-stroke:0.15px #000;"><span style="display:inline-block;width:8px;text-align:center;transform:scaleX(0.942);">F</span><span style="display:inline-block;width:8px;text-align:center;transform:scaleX(0.984);">u</span><span style="display:inline-block;width:8px;text-align:center;">n</span><span style="display:inline-block;width:8px;text-align:center;">c</span><span style="display:inline-block;width:8px;text-align:center;">t</span><span style="display:inline-block;width:8px;text-align:center;">i</span><span style="display:inline-block;width:8px;text-align:center;">o</span><span style="display:inline-block;width:8px;text-align:center;">n</span><span style="display:inline-block;width:8px;text-align:center;">s</span><span style="display:inline-block;width:8px">&nbsp;</span><span style="display:inline-block;width:8px;text-align:center;transform:scaleX(0.645);">w</span><span style="display:inline-block;width:8px;text-align:center;">i</span><span style="display:inline-block;width:8px;text-align:center;">n</span><span style="display:inline-block;width:8px;text-align:center;">d</span><span style="display:inline-block;width:8px;text-align:center;">o</span><span style="display:inline-block;width:8px;text-align:center;transform:scaleX(0.645);">w</span></div>
<svg class="a" style="left:311px;top:145px;" width="9" height="9" viewBox="0 0 9 9" preserveAspectRatio="none"><path d="M0 0 H9 V9 H0 Z M1.3 2.2 V7.7 H7.7 V2.2 Z" fill="#000" fill-rule="evenodd"/></svg>
<svg class="a" style="left:339px;top:145px;" width="9" height="9" viewBox="0 0 9 9" preserveAspectRatio="none"><path d="M2 0 H8 V6 H6 V4.8 H6.8 V2 H3.2 V3 H2 Z" fill="#000"/><path d="M0 3 H6 V9 H0 Z M1.2 4.8 V7.8 H4.8 V4.8 Z" fill="#000" fill-rule="evenodd"/></svg>
<svg class="a" style="left:365px;top:145px;" width="10" height="9" viewBox="0 0 10 9" preserveAspectRatio="none"><path d="M1 1 L9 8.2 M9 1 L1 8.2" stroke="#000" stroke-width="1.8"/></svg>
<div class="a" style="left:0px;top:163px;width:383px;height:643px;background:#ffffff;box-sizing:border-box;border:1px solid #828790;"></div>
<div class="t" style="left:6px;top:160px;font-family:'Liberation Sans';font-size:16px;font-weight:normal;letter-spacing:0px;color:#000;">Function name</div>
<div class="a" style="left:1px;top:193px;width:361px;height:591px;overflow:hidden">
<div class="a" style="left:0;top:0px;width:360px;height:24px;background:#ffe6ff"></div>
<svg class="a" style="left:3px;top:2px;" width="20" height="20" viewBox="0 0 20 20" preserveAspectRatio="none"><rect x="0.5" y="0.5" width="19" height="19" fill="url(#fg)" stroke="#2a62c0"/>
<rect x="1" y="1" width="18" height="3" fill="url(#fb)"/>
<path d="M14.399999999999999 6.4 Q11.6 5.2 10.600000000000001 9.0 L8.4 16.4 Q7.6 19.0 5.0 17.6" fill="none" stroke="#1a2a40" stroke-width="1.3"/>
<path d="M7.199999999999999 9.6 H12.8" stroke="#1a2a40" stroke-width="1.1"/></svg>
<div class="t" style="left:29px;top:-7px;font-family:'Liberation Sans';font-size:16px;font-weight:bold;letter-spacing:0px;color:#000;letter-spacing:0px"><span style="letter-spacing:-1.5px">_</span>alarm</div>
<div class="a" style="left:0;top:24px;width:360px;height:24px;background:#ffe6ff"></div>
<svg class="a" style="left:3px;top:26px;" width="20" height="20" viewBox="0 0 20 20" preserveAspectRatio="none"><rect x="0.5" y="0.5" width="19" height="19" fill="url(#fg)" stroke="#2a62c0"/>
<rect x="1" y="1" width="18" height="3" fill="url(#fb)"/>
<path d="M14.399999999999999 6.4 Q11.6 5.2 10.600000000000001 9.0 L8.4 16.4 Q7.6 19.0 5.0 17.6" fill="none" stroke="#1a2a40" stroke-width="1.3"/>
<path d="M7.199999999999999 9.6 H12.8" stroke="#1a2a40" stroke-width="1.1"/></svg>
<div class="t" style="left:29px;top:17px;font-family:'Liberation Sans';font-size:16px;font-weight:bold;letter-spacing:0px;color:#000;letter-spacing:0px"><span style="letter-spacing:-1.5px">_</span>puts</div>
<div class="a" style="left:0;top:48px;width:360px;height:24px;background:#ffe6ff"></div>
<svg class="a" style="left:3px;top:50px;" width="20" height="20" viewBox="0 0 20 20" preserveAspectRatio="none"><rect x="0.5" y="0.5" width="19" height="19" fill="url(#fg)" stroke="#2a62c0"/>
<rect x="1" y="1" width="18" height="3" fill="url(#fb)"/>
<path d="M14.399999999999999 6.4 Q11.6 5.2 10.600000000000001 9.0 L8.4 16.4 Q7.6 19.0 5.0 17.6" fill="none" stroke="#1a2a40" stroke-width="1.3"/>
<path d="M7.199999999999999 9.6 H12.8" stroke="#1a2a40" stroke-width="1.1"/></svg>
<div class="t" style="left:29px;top:41px;font-family:'Liberation Sans';font-size:16px;font-weight:bold;letter-spacing:0px;color:#000;letter-spacing:0px"><span style="letter-spacing:-1.5px">_</span>system</div>
<div class="a" style="left:0;top:72px;width:360px;height:24px;background:#ffe6ff"></div>
<svg class="a" style="left:3px;top:74px;" width="20" height="20" viewBox="0 0 20 20" preserveAspectRatio="none"><rect x="0.5" y="0.5" width="19" height="19" fill="url(#fg)" stroke="#2a62c0"/>
<rect x="1" y="1" width="18" height="3" fill="url(#fb)"/>
<path d="M14.399999999999999 6.4 Q11.6 5.2 10.600000000000001 9.0 L8.4 16.4 Q7.6 19.0 5.0 17.6" fill="none" stroke="#1a2a40" stroke-width="1.3"/>
<path d="M7.199999999999999 9.6 H12.8" stroke="#1a2a40" stroke-width="1.1"/></svg>
<div class="t" style="left:29px;top:65px;font-family:'Liberation Sans';font-size:16px;font-weight:bold;letter-spacing:0px;color:#000;letter-spacing:0px"><span style="letter-spacing:-1.5px">_</span><span style="letter-spacing:-1.5px">_</span><span style="letter-spacing:-1.5px">_</span>libc<span style="letter-spacing:-1.5px">_</span>start<span style="letter-spacing:-1.5px">_</span>main</div>
<div class="a" style="left:0;top:96px;width:360px;height:24px;background:#ffe6ff"></div>
<svg class="a" style="left:3px;top:98px;" width="20" height="20" viewBox="0 0 20 20" preserveAspectRatio="none"><rect x="0.5" y="0.5" width="19" height="19" fill="url(#fg)" stroke="#2a62c0"/>
<rect x="1" y="1" width="18" height="3" fill="url(#fb)"/>
<path d="M14.399999999999999 6.4 Q11.6 5.2 10.600000000000001 9.0 L8.4 16.4 Q7.6 19.0 5.0 17.6" fill="none" stroke="#1a2a40" stroke-width="1.3"/>
<path d="M7.199999999999999 9.6 H12.8" stroke="#1a2a40" stroke-width="1.1"/></svg>
<div class="t" style="left:29px;top:89px;font-family:'Liberation Sans';font-size:16px;font-weight:bold;letter-spacing:0px;color:#000;letter-spacing:0px"><span style="letter-spacing:-1.5px">_</span>write</div>
<div class="a" style="left:0;top:120px;width:360px;height:24px;background:#ffe6ff"></div>
<svg class="a" style="left:3px;top:122px;" width="20" height="20" viewBox="0 0 20 20" preserveAspectRatio="none"><rect x="0.5" y="0.5" width="19" height="19" fill="url(#fg)" stroke="#2a62c0"/>
<rect x="1" y="1" width="18" height="3" fill="url(#fb)"/>
<path d="M14.399999999999999 6.4 Q11.6 5.2 10.600000000000001 9.0 L8.4 16.4 Q7.6 19.0 5.0 17.6" fill="none" stroke="#1a2a40" stroke-width="1.3"/>
<path d="M7.199999999999999 9.6 H12.8" stroke="#1a2a40" stroke-width="1.1"/></svg>
<div class="t" style="left:29px;top:113px;font-family:'Liberation Sans';font-size:16px;font-weight:bold;letter-spacing:0px;color:#000;letter-spacing:0px"><span style="letter-spacing:-1.5px">_</span>setvbuf</div>
<div class="a" style="left:0;top:144px;width:360px;height:24px;background:#ffe6ff"></div>
<svg class="a" style="left:3px;top:146px;" width="20" height="20" viewBox="0 0 20 20" preserveAspectRatio="none"><rect x="0.5" y="0.5" width="19" height="19" fill="url(#fg)" stroke="#2a62c0"/>
<rect x="1" y="1" width="18" height="3" fill="url(#fb)"/>
<path d="M14.399999999999999 6.4 Q11.6 5.2 10.600000000000001 9.0 L8.4 16.4 Q7.6 19.0 5.0 17.6" fill="none" stroke="#1a2a40" stroke-width="1.3"/>
<path d="M7.199999999999999 9.6 H12.8" stroke="#1a2a40" stroke-width="1.1"/></svg>
<div class="t" style="left:29px;top:137px;font-family:'Liberation Sans';font-size:16px;font-weight:normal;letter-spacing:0px;color:#000;letter-spacing:0.6px"><span style="letter-spacing:-2.5px">_</span><span style="letter-spacing:-2.5px">_</span>gmon<span style="letter-spacing:-2.5px">_</span>start<span style="letter-spacing:-2.5px">_</span><span style="letter-spacing:-2.5px">_</span></div>
<svg class="a" style="left:3px;top:170px;" width="20" height="20" viewBox="0 0 20 20" preserveAspectRatio="none"><rect x="0.5" y="0.5" width="19" height="19" fill="url(#fg)" stroke="#2a62c0"/>
<rect x="1" y="1" width="18" height="3" fill="url(#fb)"/>
<path d="M14.399999999999999 6.4 Q11.6 5.2 10.600000000000001 9.0 L8.4 16.4 Q7.6 19.0 5.0 17.6" fill="none" stroke="#1a2a40" stroke-width="1.3"/>
<path d="M7.199999999999999 9.6 H12.8" stroke="#1a2a40" stroke-width="1.1"/></svg>
<div class="t" style="left:29px;top:161px;font-family:'Liberation Sans';font-size:16px;font-weight:normal;letter-spacing:0px;color:#000;letter-spacing:0.6px"><span style="letter-spacing:-2.5px">_</span>start</div>
<svg class="a" style="left:3px;top:194px;" width="20" height="20" viewBox="0 0 20 20" preserveAspectRatio="none"><rect x="0.5" y="0.5" width="19" height="19" fill="url(#fg)" stroke="#2a62c0"/>
<rect x="1" y="1" width="18" height="3" fill="url(#fb)"/>
<path d="M14.399999999999999 6.4 Q11.6 5.2 10.600000000000001 9.0 L8.4 16.4 Q7.6 19.0 5.0 17.6" fill="none" stroke="#1a2a40" stroke-width="1.3"/>
<path d="M7.199999999999999 9.6 H12.8" stroke="#1a2a40" stroke-width="1.1"/></svg>
<div class="t" style="left:29px;top:185px;font-family:'Liberation Sans';font-size:16px;font-weight:normal;letter-spacing:0px;color:#000;letter-spacing:0.6px"><span style="letter-spacing:-2.5px">_</span><span style="letter-spacing:-2.5px">_</span>x86<span style="letter-spacing:-2.5px">_</span>get<span style="letter-spacing:-2.5px">_</span>pc<span style="letter-spacing:-2.5px">_</span>thunk<span style="letter-spacing:-2.5px">_</span>bx</div>
<svg class="a" style="left:3px;top:218px;" width="20" height="20" viewBox="0 0 20 20" preserveAspectRatio="none"><rect x="0.5" y="0.5" width="19" height="19" fill="url(#fg)" stroke="#2a62c0"/>
<rect x="1" y="1" width="18" height="3" fill="url(#fb)"/>
<path d="M14.399999999999999 6.4 Q11.6 5.2 10.600000000000001 9.0 L8.4 16.4 Q7.6 19.0 5.0 17.6" fill="none" stroke="#1a2a40" stroke-width="1.3"/>
<path d="M7.199999999999999 9.6 H12.8" stroke="#1a2a40" stroke-width="1.1"/></svg>
<div class="t" style="left:29px;top:209px;font-family:'Liberation Sans';font-size:16px;font-weight:normal;letter-spacing:0px;color:#000;letter-spacing:0.6px">deregister<span style="letter-spacing:-2.5px">_</span>tm<span style="letter-spacing:-2.5px">_</span>clones</div>
<svg class="a" style="left:3px;top:242px;" width="20" height="20" viewBox="0 0 20 20" preserveAspectRatio="none"><rect x="0.5" y="0.5" width="19" height="19" fill="url(#fg)" stroke="#2a62c0"/>
<rect x="1" y="1" width="18" height="3" fill="url(#fb)"/>
<path d="M14.399999999999999 6.4 Q11.6 5.2 10.600000000000001 9.0 L8.4 16.4 Q7.6 19.0 5.0 17.6" fill="none" stroke="#1a2a40" stroke-width="1.3"/>
<path d="M7.199999999999999 9.6 H12.8" stroke="#1a2a40" stroke-width="1.1"/></svg>
<div class="t" style="left:29px;top:233px;font-family:'Liberation Sans';font-size:16px;font-weight:normal;letter-spacing:0px;color:#000;letter-spacing:0.6px">register<span style="letter-spacing:-2.5px">_</span>tm<span style="letter-spacing:-2.5px">_</span>clones</div>
<svg class="a" style="left:3px;top:266px;" width="20" height="20" viewBox="0 0 20 20" preserveAspectRatio="none"><rect x="0.5" y="0.5" width="19" height="19" fill="url(#fg)" stroke="#2a62c0"/>
<rect x="1" y="1" width="18" height="3" fill="url(#fb)"/>
<path d="M14.399999999999999 6.4 Q11.6 5.2 10.600000000000001 9.0 L8.4 16.4 Q7.6 19.0 5.0 17.6" fill="none" stroke="#1a2a40" stroke-width="1.3"/>
<path d="M7.199999999999999 9.6 H12.8" stroke="#1a2a40" stroke-width="1.1"/></svg>
<div class="t" style="left:29px;top:257px;font-family:'Liberation Sans';font-size:16px;font-weight:normal;letter-spacing:0px;color:#000;letter-spacing:0.6px"><span style="letter-spacing:-2.5px">_</span><span style="letter-spacing:-2.5px">_</span>do<span style="letter-spacing:-2.5px">_</span>global<span style="letter-spacing:-2.5px">_</span>dtors<span style="letter-spacing:-2.5px">_</span>aux</div>
<svg class="a" style="left:3px;top:290px;" width="20" height="20" viewBox="0 0 20 20" preserveAspectRatio="none"><rect x="0.5" y="0.5" width="19" height="19" fill="url(#fg)" stroke="#2a62c0"/>
<rect x="1" y="1" width="18" height="3" fill="url(#fb)"/>
<path d="M14.399999999999999 6.4 Q11.6 5.2 10.600000000000001 9.0 L8.4 16.4 Q7.6 19.0 5.0 17.6" fill="none" stroke="#1a2a40" stroke-width="1.3"/>
<path d="M7.199999999999999 9.6 H12.8" stroke="#1a2a40" stroke-width="1.1"/></svg>
<div class="t" style="left:29px;top:281px;font-family:'Liberation Sans';font-size:16px;font-weight:normal;letter-spacing:0px;color:#000;letter-spacing:0.6px">frame<span style="letter-spacing:-2.5px">_</span>dummy</div>
<div class="a" style="left:0;top:312px;width:360px;height:24px;background:#efefef"></div>
<svg class="a" style="left:3px;top:314px;" width="20" height="20" viewBox="0 0 20 20" preserveAspectRatio="none"><rect x="0.5" y="0.5" width="19" height="19" fill="#a8d0f0" stroke="#2a62c0"/>
<rect x="1" y="1" width="18" height="3" fill="url(#fb)"/>
<path d="M14.399999999999999 6.4 Q11.6 5.2 10.600000000000001 9.0 L8.4 16.4 Q7.6 19.0 5.0 17.6" fill="none" stroke="#1a2a40" stroke-width="1.3"/>
<path d="M7.199999999999999 9.6 H12.8" stroke="#1a2a40" stroke-width="1.1"/></svg>
<div class="t" style="left:29px;top:305px;font-family:'Liberation Sans';font-size:16px;font-weight:normal;letter-spacing:0px;color:#000;letter-spacing:0.6px">buffer</div>
<svg class="a" style="left:3px;top:338px;" width="20" height="20" viewBox="0 0 20 20" preserveAspectRatio="none"><rect x="0.5" y="0.5" width="19" height="19" fill="url(#fg)" stroke="#2a62c0"/>
<rect x="1" y="1" width="18" height="3" fill="url(#fb)"/>
<path d="M14.399999999999999 6.4 Q11.6 5.2 10.600000000000001 9.0 L8.4 16.4 Q7.6 19.0 5.0 17.6" fill="none" stroke="#1a2a40" stroke-width="1.3"/>
<path d="M7.199999999999999 9.6 H12.8" stroke="#1a2a40" stroke-width="1.1"/></svg>
<div class="t" style="left:29px;top:329px;font-family:'Liberation Sans';font-size:16px;font-weight:normal;letter-spacing:0px;color:#000;letter-spacing:0.6px">init</div>
<svg class="a" style="left:3px;top:362px;" width="20" height="20" viewBox="0 0 20 20" preserveAspectRatio="none"><rect x="0.5" y="0.5" width="19" height="19" fill="url(#fg)" stroke="#2a62c0"/>
<rect x="1" y="1" width="18" height="3" fill="url(#fb)"/>
<path d="M14.399999999999999 6.4 Q11.6 5.2 10.600000000000001 9.0 L8.4 16.4 Q7.6 19.0 5.0 17.6" fill="none" stroke="#1a2a40" stroke-width="1.3"/>
<path d="M7.199999999999999 9.6 H12.8" stroke="#1a2a40" stroke-width="1.1"/></svg>
<div class="t" style="left:29px;top:353px;font-family:'Liberation Sans';font-size:16px;font-weight:normal;letter-spacing:0px;color:#000;letter-spacing:0.6px">vuln</div>
<svg class="a" style="left:3px;top:386px;" width="20" height="20" viewBox="0 0 20 20" preserveAspectRatio="none"><rect x="0.5" y="0.5" width="19" height="19" fill="url(#fg)" stroke="#2a62c0"/>
<rect x="1" y="1" width="18" height="3" fill="url(#fb)"/>
<path d="M14.399999999999999 6.4 Q11.6 5.2 10.600000000000001 9.0 L8.4 16.4 Q7.6 19.0 5.0 17.6" fill="none" stroke="#1a2a40" stroke-width="1.3"/>
<path d="M7.199999999999999 9.6 H12.8" stroke="#1a2a40" stroke-width="1.1"/></svg>
<div class="t" style="left:29px;top:377px;font-family:'Liberation Sans';font-size:16px;font-weight:bold;letter-spacing:0px;color:#000;letter-spacing:0px">main</div>
<svg class="a" style="left:3px;top:410px;" width="20" height="20" viewBox="0 0 20 20" preserveAspectRatio="none"><rect x="0.5" y="0.5" width="19" height="19" fill="url(#fg)" stroke="#2a62c0"/>
<rect x="1" y="1" width="18" height="3" fill="url(#fb)"/>
<path d="M14.399999999999999 6.4 Q11.6 5.2 10.600000000000001 9.0 L8.4 16.4 Q7.6 19.0 5.0 17.6" fill="none" stroke="#1a2a40" stroke-width="1.3"/>
<path d="M7.199999999999999 9.6 H12.8" stroke="#1a2a40" stroke-width="1.1"/></svg>
<div class="t" style="left:29px;top:401px;font-family:'Liberation Sans';font-size:16px;font-weight:normal;letter-spacing:0px;color:#000;letter-spacing:0.6px"><span style="letter-spacing:-2.5px">_</span><span style="letter-spacing:-2.5px">_</span>libc<span style="letter-spacing:-2.5px">_</span>csu<span style="letter-spacing:-2.5px">_</span>init</div>
<svg class="a" style="left:3px;top:434px;" width="20" height="20" viewBox="0 0 20 20" preserveAspectRatio="none"><rect x="0.5" y="0.5" width="19" height="19" fill="url(#fg)" stroke="#2a62c0"/>
<rect x="1" y="1" width="18" height="3" fill="url(#fb)"/>
<path d="M14.399999999999999 6.4 Q11.6 5.2 10.600000000000001 9.0 L8.4 16.4 Q7.6 19.0 5.0 17.6" fill="none" stroke="#1a2a40" stroke-width="1.3"/>
<path d="M7.199999999999999 9.6 H12.8" stroke="#1a2a40" stroke-width="1.1"/></svg>
<div class="t" style="left:29px;top:425px;font-family:'Liberation Sans';font-size:16px;font-weight:normal;letter-spacing:0px;color:#000;letter-spacing:0.6px"><span style="letter-spacing:-2.5px">_</span><span style="letter-spacing:-2.5px">_</span>libc<span style="letter-spacing:-2.5px">_</span>csu<span style="letter-spacing:-2.5px">_</span>fini</div>
<svg class="a" style="left:3px;top:458px;" width="20" height="20" viewBox="0 0 20 20" preserveAspectRatio="none"><rect x="0.5" y="0.5" width="19" height="19" fill="url(#fg)" stroke="#2a62c0"/>
<rect x="1" y="1" width="18" height="3" fill="url(#fb)"/>
<path d="M14.399999999999999 6.4 Q11.6 5.2 10.600000000000001 9.0 L8.4 16.4 Q7.6 19.0 5.0 17.6" fill="none" stroke="#1a2a40" stroke-width="1.3"/>
<path d="M7.199999999999999 9.6 H12.8" stroke="#1a2a40" stroke-width="1.1"/></svg>
<div class="t" style="left:29px;top:449px;font-family:'Liberation Sans';font-size:16px;font-weight:normal;letter-spacing:0px;color:#000;letter-spacing:0.6px"><span style="letter-spacing:-2.5px">_</span>term<span style="letter-spacing:-2.5px">_</span>proc</div>
<div class="a" style="left:0;top:480px;width:360px;height:24px;background:#ffe6ff"></div>
<svg class="a" style="left:3px;top:482px;" width="20" height="20" viewBox="0 0 20 20" preserveAspectRatio="none"><rect x="0.5" y="0.5" width="19" height="19" fill="url(#fg)" stroke="#2a62c0"/>
<rect x="1" y="1" width="18" height="3" fill="url(#fb)"/>
<path d="M14.399999999999999 6.4 Q11.6 5.2 10.600000000000001 9.0 L8.4 16.4 Q7.6 19.0 5.0 17.6" fill="none" stroke="#1a2a40" stroke-width="1.3"/>
<path d="M7.199999999999999 9.6 H12.8" stroke="#1a2a40" stroke-width="1.1"/></svg>
<div class="t" style="left:29px;top:473px;font-family:'Liberation Sans';font-size:16px;font-weight:bold;letter-spacing:0px;color:#000;letter-spacing:0px">read</div>
<div class="a" style="left:0;top:504px;width:360px;height:24px;background:#ffe6ff"></div>
<svg class="a" style="left:3px;top:506px;" width="20" height="20" viewBox="0 0 20 20" preserveAspectRatio="none"><rect x="0.5" y="0.5" width="19" height="19" fill="url(#fg)" stroke="#2a62c0"/>
<rect x="1" y="1" width="18" height="3" fill="url(#fb)"/>
<path d="M14.399999999999999 6.4 Q11.6 5.2 10.600000000000001 9.0 L8.4 16.4 Q7.6 19.0 5.0 17.6" fill="none" stroke="#1a2a40" stroke-width="1.3"/>
<path d="M7.199999999999999 9.6 H12.8" stroke="#1a2a40" stroke-width="1.1"/></svg>
<div class="t" style="left:29px;top:497px;font-family:'Liberation Sans';font-size:16px;font-weight:bold;letter-spacing:0px;color:#000;letter-spacing:0px">alarm</div>
<div class="a" style="left:0;top:528px;width:360px;height:24px;background:#ffe6ff"></div>
<svg class="a" style="left:3px;top:530px;" width="20" height="20" viewBox="0 0 20 20" preserveAspectRatio="none"><rect x="0.5" y="0.5" width="19" height="19" fill="url(#fg)" stroke="#2a62c0"/>
<rect x="1" y="1" width="18" height="3" fill="url(#fb)"/>
<path d="M14.399999999999999 6.4 Q11.6 5.2 10.600000000000001 9.0 L8.4 16.4 Q7.6 19.0 5.0 17.6" fill="none" stroke="#1a2a40" stroke-width="1.3"/>
<path d="M7.199999999999999 9.6 H12.8" stroke="#1a2a40" stroke-width="1.1"/></svg>
<div class="t" style="left:29px;top:521px;font-family:'Liberation Sans';font-size:16px;font-weight:bold;letter-spacing:0px;color:#000;letter-spacing:0px">puts</div>
<div class="a" style="left:0;top:552px;width:360px;height:24px;background:#ffe6ff"></div>
<svg class="a" style="left:3px;top:554px;" width="20" height="20" viewBox="0 0 20 20" preserveAspectRatio="none"><rect x="0.5" y="0.5" width="19" height="19" fill="url(#fg)" stroke="#2a62c0"/>
<rect x="1" y="1" width="18" height="3" fill="url(#fb)"/>
<path d="M14.399999999999999 6.4 Q11.6 5.2 10.600000000000001 9.0 L8.4 16.4 Q7.6 19.0 5.0 17.6" fill="none" stroke="#1a2a40" stroke-width="1.3"/>
<path d="M7.199999999999999 9.6 H12.8" stroke="#1a2a40" stroke-width="1.1"/></svg>
<div class="t" style="left:29px;top:545px;font-family:'Liberation Sans';font-size:16px;font-weight:bold;letter-spacing:0px;color:#000;letter-spacing:0px">system</div>
<div class="a" style="left:0;top:576px;width:360px;height:24px;background:#ffe6ff"></div>
<svg class="a" style="left:3px;top:578px;" width="20" height="20" viewBox="0 0 20 20" preserveAspectRatio="none"><rect x="0.5" y="0.5" width="19" height="19" fill="url(#fg)" stroke="#2a62c0"/>
<rect x="1" y="1" width="18" height="3" fill="url(#fb)"/>
<path d="M14.399999999999999 6.4 Q11.6 5.2 10.600000000000001 9.0 L8.4 16.4 Q7.6 19.0 5.0 17.6" fill="none" stroke="#1a2a40" stroke-width="1.3"/>
<path d="M7.199999999999999 9.6 H12.8" stroke="#1a2a40" stroke-width="1.1"/></svg>
<div class="t" style="left:29px;top:569px;font-family:'Liberation Sans';font-size:16px;font-weight:bold;letter-spacing:0px;color:#000;letter-spacing:0px"><span style="letter-spacing:-1.5px">_</span><span style="letter-spacing:-1.5px">_</span>libc<span style="letter-spacing:-1.5px">_</span>start<span style="letter-spacing:-1.5px">_</span>main</div>
</div>
<div class="a" style="left:362px;top:164px;width:20px;height:620px;background:#f0f0f0;"></div>
<svg class="a" style="left:366px;top:170px;" width="11" height="8" viewBox="0 0 11 8" preserveAspectRatio="none"><path d="M1 7 L5.5 2 L10 7" fill="none" stroke="#555" stroke-width="2"/></svg>
<div class="a" style="left:363px;top:241px;width:18px;height:447px;background:#cdcdcd;"></div>
<svg class="a" style="left:366px;top:769px;" width="11" height="8" viewBox="0 0 11 8" preserveAspectRatio="none"><path d="M1 1 L5.5 6 L10 1" fill="none" stroke="#555" stroke-width="2"/></svg>
<div class="a" style="left:1px;top:784px;width:381px;height:21px;background:#f0f0f0;"></div>
<svg class="a" style="left:6px;top:789px;" width="8" height="11" viewBox="0 0 8 11" preserveAspectRatio="none"><path d="M7 1 L2 5.5 L7 10" fill="none" stroke="#555" stroke-width="2"/></svg>
<div class="a" style="left:22px;top:786px;width:86px;height:18px;background:#cdcdcd;"></div>
<svg class="a" style="left:346px;top:789px;" width="8" height="11" viewBox="0 0 8 11" preserveAspectRatio="none"><path d="M1 1 L6 5.5 L1 10" fill="none" stroke="#555" stroke-width="2"/></svg>
<div class="t" style="left:6px;top:800px;font-family:'Liberation Sans';font-size:16px;font-weight:normal;letter-spacing:0px;color:#000;">Line 17 of 31</div>
<div class="a" style="left:387px;top:135px;width:194px;height:29px;background:#ffffff;"></div>
<div class="a" style="left:387px;top:135px;width:1px;height:28px;background:#d9d9d9;"></div>
<div class="a" style="left:387px;top:135px;width:194px;height:1px;background:#d9d9d9;"></div>
<div class="a" style="left:580px;top:135px;width:1px;height:28px;background:#d9d9d9;"></div>
<svg class="a" style="left:402px;top:140px;" width="17" height="17" viewBox="0 0 17 17" preserveAspectRatio="none"><defs><linearGradient id="tg" x1="0" y1="0" x2="1" y2="0"><stop offset="0" stop-color="#30e0ff"/><stop offset="1" stop-color="#3030e0"/></linearGradient></defs>
<rect x="0.6" y="0.6" width="13.3" height="13.8" fill="#e6fcff" stroke="#2a7ae8" stroke-width="1.2"/><rect x="1" y="1" width="12.6" height="2.6" fill="url(#tg)"/>
<rect x="5.6" y="4.2" width="10.3" height="12.2" fill="#fff" stroke="#1a4a8a" stroke-width="1.2"/>
<path d="M7.3 6.5 H10.5 M9.2 8.5 H14 M9.2 10.5 H14 M7.3 12.5 H10.5 M9.2 14.5 H14" stroke="#4a545e" stroke-width="1.1"/></svg>
<svg class="a" style="left:546px;top:142px;" width="14" height="14" viewBox="0 0 14 14" preserveAspectRatio="none"><rect x="0.6" y="0.6" width="12.8" height="12.8" rx="2" fill="#e27a4c" stroke="#d8361e" stroke-width="1.2"/><rect x="1.8" y="1.8" width="10.4" height="10.4" rx="1" fill="none" stroke="#eea282" stroke-width="0.8"/><path d="M4.2 4.2 L9.8 9.8 M9.8 4.2 L4.2 9.8" stroke="#fff" stroke-width="2.1"/></svg>
<div class="t" style="left:441px;top:131px;font-family:'Liberation Serif';font-size:16px;color:#000;-webkit-text-stroke:0.15px #000;"><span style="display:inline-block;width:8px;text-align:center;">I</span><span style="display:inline-block;width:8px;text-align:center;transform:scaleX(0.708);">D</span><span style="display:inline-block;width:8px;text-align:center;transform:scaleX(0.656);">A</span><span style="display:inline-block;width:8px">&nbsp;</span><span style="display:inline-block;width:8px;text-align:center;transform:scaleX(0.661);">V</span><span style="display:inline-block;width:8px;text-align:center;">i</span><span style="display:inline-block;width:8px;text-align:center;">e</span><span style="display:inline-block;width:8px;text-align:center;transform:scaleX(0.645);">w</span><span style="display:inline-block;width:8px;text-align:center;">-</span><span style="display:inline-block;width:8px;text-align:center;transform:scaleX(0.656);">A</span></div>
<div class="a" style="left:581px;top:137px;width:188px;height:1px;background:#d9d9d9;"></div>
<div class="a" style="left:769px;top:137px;width:1px;height:26px;background:#d9d9d9;"></div>
<svg class="a" style="left:594px;top:141px;" width="17" height="17" viewBox="0 0 17 17" preserveAspectRatio="none"><defs><linearGradient id="tg" x1="0" y1="0" x2="1" y2="0"><stop offset="0" stop-color="#30e0ff"/><stop offset="1" stop-color="#3030e0"/></linearGradient></defs>
<rect x="0.6" y="0.6" width="13.3" height="13.8" fill="#e6fcff" stroke="#2a7ae8" stroke-width="1.2"/><rect x="1" y="1" width="12.6" height="2.6" fill="url(#tg)"/>
<rect x="5.6" y="4.2" width="10.3" height="12.2" fill="#fff" stroke="#1a4a8a" stroke-width="1.2"/>
<path d="M7.3 6.5 H10.5 M9.2 8.5 H14 M9.2 10.5 H14 M7.3 12.5 H10.5 M9.2 14.5 H14" stroke="#4a545e" stroke-width="1.1"/></svg>
<svg class="a" style="left:737px;top:143px;" width="14" height="14" viewBox="0 0 14 14" preserveAspectRatio="none"><rect x="0.6" y="0.6" width="12.8" height="12.8" rx="2" fill="#bababa" stroke="#a4a4a4" stroke-width="1.2"/><rect x="1.8" y="1.8" width="10.4" height="10.4" rx="1" fill="none" stroke="#cfcfcf" stroke-width="0.8"/><path d="M4.2 4.2 L9.8 9.8 M9.8 4.2 L4.2 9.8" stroke="#fff" stroke-width="2.1"/></svg>
<div class="t" style="left:623px;top:131px;font-family:'Liberation Serif';font-size:16px;color:#000;-webkit-text-stroke:0.15px #000;"><span style="display:inline-block;width:8px;text-align:center;transform:scaleX(0.950);">P</span><span style="display:inline-block;width:8px;text-align:center;">s</span><span style="display:inline-block;width:8px;text-align:center;">e</span><span style="display:inline-block;width:8px;text-align:center;transform:scaleX(0.984);">u</span><span style="display:inline-block;width:8px;text-align:center;">d</span><span style="display:inline-block;width:8px;text-align:center;">o</span><span style="display:inline-block;width:8px;text-align:center;">c</span><span style="display:inline-block;width:8px;text-align:center;">o</span><span style="display:inline-block;width:8px;text-align:center;">d</span><span style="display:inline-block;width:8px;text-align:center;">e</span><span style="display:inline-block;width:8px;text-align:center;">-</span><span style="display:inline-block;width:8px;text-align:center;transform:scaleX(0.656);">A</span></div>
<div class="a" style="left:770px;top:137px;width:191px;height:1px;background:#d9d9d9;"></div>
<div class="a" style="left:961px;top:137px;width:1px;height:26px;background:#d9d9d9;"></div>
<svg class="a" style="left:785px;top:141px;" width="17" height="17" viewBox="0 0 17 17" preserveAspectRatio="none"><defs><linearGradient id="wg2" x1="0" y1="0" x2="1" y2="0"><stop offset="0" stop-color="#40e8ff"/><stop offset="1" stop-color="#2a30d8"/></linearGradient></defs><rect x="0.6" y="0.6" width="13.8" height="13.8" fill="#f4fdff" stroke="#2a6ad8" stroke-width="1.2"/><rect x="1.2" y="1.2" width="12.6" height="2.2" fill="url(#wg2)"/><path d="M7.5 4.2 L11.3 6.4 V10.6 L7.5 12.8 L3.7 10.6 V6.4 Z" fill="#dceaff" stroke="#2a30e8" stroke-width="1.1"/></svg>
<svg class="a" style="left:929px;top:143px;" width="14" height="14" viewBox="0 0 14 14" preserveAspectRatio="none"><rect x="0.6" y="0.6" width="12.8" height="12.8" rx="2" fill="#bababa" stroke="#a4a4a4" stroke-width="1.2"/><rect x="1.8" y="1.8" width="10.4" height="10.4" rx="1" fill="none" stroke="#cfcfcf" stroke-width="0.8"/><path d="M4.2 4.2 L9.8 9.8 M9.8 4.2 L4.2 9.8" stroke="#fff" stroke-width="2.1"/></svg>
<div class="t" style="left:823px;top:131px;font-family:'Liberation Serif';font-size:16px;color:#000;-webkit-text-stroke:0.15px #000;"><span style="display:inline-block;width:8px;text-align:center;transform:scaleX(0.697);">H</span><span style="display:inline-block;width:8px;text-align:center;">e</span><span style="display:inline-block;width:8px;text-align:center;transform:scaleX(0.966);">x</span><span style="display:inline-block;width:8px">&nbsp;</span><span style="display:inline-block;width:8px;text-align:center;transform:scaleX(0.661);">V</span><span style="display:inline-block;width:8px;text-align:center;">i</span><span style="display:inline-block;width:8px;text-align:center;">e</span><span style="display:inline-block;width:8px;text-align:center;transform:scaleX(0.645);">w</span><span style="display:inline-block;width:8px;text-align:center;">-</span><span style="display:inline-block;width:8px;text-align:center;">1</span></div>
<div class="a" style="left:962px;top:137px;width:191px;height:1px;background:#d9d9d9;"></div>
<div class="a" style="left:1153px;top:137px;width:1px;height:26px;background:#d9d9d9;"></div>
<svg class="a" style="left:977px;top:141px;" width="17" height="17" viewBox="0 0 17 17" preserveAspectRatio="none"><defs><linearGradient id="wg2" x1="0" y1="0" x2="1" y2="0"><stop offset="0" stop-color="#40e8ff"/><stop offset="1" stop-color="#2a30d8"/></linearGradient></defs><rect x="0.6" y="0.6" width="13.8" height="13.8" fill="#f4fdff" stroke="#2a6ad8" stroke-width="1.2"/><rect x="1.2" y="1.2" width="12.6" height="2.2" fill="url(#wg2)"/><path d="M4 13.3 L6.6 5.6 H8.4 L11 13.3" fill="none" stroke="#102a60" stroke-width="1.5"/><rect x="6.3" y="4.3" width="2.4" height="2.4" fill="none" stroke="#102a60" stroke-width="1.1"/><path d="M5.6 11.2 L9.6 8.6" stroke="#102a60" stroke-width="1"/></svg>
<svg class="a" style="left:1121px;top:143px;" width="14" height="14" viewBox="0 0 14 14" preserveAspectRatio="none"><rect x="0.6" y="0.6" width="12.8" height="12.8" rx="2" fill="#bababa" stroke="#a4a4a4" stroke-width="1.2"/><rect x="1.8" y="1.8" width="10.4" height="10.4" rx="1" fill="none" stroke="#cfcfcf" stroke-width="0.8"/><path d="M4.2 4.2 L9.8 9.8 M9.8 4.2 L4.2 9.8" stroke="#fff" stroke-width="2.1"/></svg>
<div class="t" style="left:1015px;top:131px;font-family:'Liberation Serif';font-size:16px;color:#000;-webkit-text-stroke:0.15px #000;"><span style="display:inline-block;width:8px;text-align:center;">S</span><span style="display:inline-block;width:8px;text-align:center;">t</span><span style="display:inline-block;width:8px;text-align:center;">r</span><span style="display:inline-block;width:8px;text-align:center;transform:scaleX(0.984);">u</span><span style="display:inline-block;width:8px;text-align:center;">c</span><span style="display:inline-block;width:8px;text-align:center;">t</span><span style="display:inline-block;width:8px;text-align:center;transform:scaleX(0.984);">u</span><span style="display:inline-block;width:8px;text-align:center;">r</span><span style="display:inline-block;width:8px;text-align:center;">e</span><span style="display:inline-block;width:8px;text-align:center;">s</span></div>
<div class="a" style="left:1154px;top:137px;width:191px;height:1px;background:#d9d9d9;"></div>
<div class="a" style="left:1345px;top:137px;width:1px;height:26px;background:#d9d9d9;"></div>
<svg class="a" style="left:1169px;top:141px;" width="17" height="17" viewBox="0 0 17 17" preserveAspectRatio="none"><defs><linearGradient id="wg2" x1="0" y1="0" x2="1" y2="0"><stop offset="0" stop-color="#40e8ff"/><stop offset="1" stop-color="#2a30d8"/></linearGradient></defs><rect x="0.6" y="0.6" width="14.8" height="13.8" fill="#f4fdff" stroke="#2a6ad8" stroke-width="1.2"/><rect x="1.2" y="1.2" width="13.6" height="2.2" fill="url(#wg2)"/><path d="M5.5 2.9 L7.1 4.5 L5.5 6.1 L3.9 4.5 Z" fill="#20f0ff" stroke="#002080" stroke-width="0.9"/><path d="M8.2 4.5 H11" stroke="#0040c0" stroke-width="1.1"/><path d="M5.5 6.9 L7.1 8.5 L5.5 10.1 L3.9 8.5 Z" fill="#20f0ff" stroke="#002080" stroke-width="0.9"/><path d="M8.2 8.5 H11" stroke="#0040c0" stroke-width="1.1"/><path d="M5.5 10.9 L7.1 12.5 L5.5 14.1 L3.9 12.5 Z" fill="#20f0ff" stroke="#002080" stroke-width="0.9"/><path d="M8.2 12.5 H11" stroke="#0040c0" stroke-width="1.1"/></svg>
<svg class="a" style="left:1312px;top:143px;" width="14" height="14" viewBox="0 0 14 14" preserveAspectRatio="none"><rect x="0.6" y="0.6" width="12.8" height="12.8" rx="2" fill="#bababa" stroke="#a4a4a4" stroke-width="1.2"/><rect x="1.8" y="1.8" width="10.4" height="10.4" rx="1" fill="none" stroke="#cfcfcf" stroke-width="0.8"/><path d="M4.2 4.2 L9.8 9.8 M9.8 4.2 L4.2 9.8" stroke="#fff" stroke-width="2.1"/></svg>
<div class="t" style="left:1225px;top:131px;font-family:'Liberation Serif';font-size:16px;color:#000;-webkit-text-stroke:0.15px #000;"><span style="display:inline-block;width:8px;text-align:center;transform:scaleX(0.869);">E</span><span style="display:inline-block;width:8px;text-align:center;">n</span><span style="display:inline-block;width:8px;text-align:center;transform:scaleX(0.984);">u</span><span style="display:inline-block;width:8px;text-align:center;transform:scaleX(0.624);">m</span><span style="display:inline-block;width:8px;text-align:center;">s</span></div>
<div class="a" style="left:1346px;top:137px;width:190px;height:1px;background:#d9d9d9;"></div>
<div class="a" style="left:1536px;top:137px;width:1px;height:26px;background:#d9d9d9;"></div>
<svg class="a" style="left:1360px;top:141px;" width="17" height="17" viewBox="0 0 17 17" preserveAspectRatio="none"><defs><linearGradient id="wg2" x1="0" y1="0" x2="1" y2="0"><stop offset="0" stop-color="#40e8ff"/><stop offset="1" stop-color="#2a30d8"/></linearGradient></defs><rect x="0.6" y="0.6" width="13.8" height="13.8" fill="#f4fdff" stroke="#2a6ad8" stroke-width="1.2"/><rect x="1.2" y="1.2" width="12.6" height="2.2" fill="url(#wg2)"/><rect x="7.1" y="5.6" width="8.8" height="9.8" fill="#fbfdff" stroke="#1a4a8a" stroke-width="1.2"/><path d="M9.1 7.5 H13.9" stroke="#0000a0" stroke-width="1"/><path d="M9.1 9.5 H13.9" stroke="#0000a0" stroke-width="1"/><path d="M9.1 11.5 H13.9" stroke="#0000a0" stroke-width="1"/><path d="M9.1 13.5 H13.9" stroke="#0000a0" stroke-width="1"/><path d="M0.9 4.6 L3.4 6.4 L3.6 4.2 L7.6 7.7 L3.6 11.2 L3.5 9 L1.6 9.2 Z" fill="#30d030" stroke="#003a10" stroke-width="0.9"/></svg>
<svg class="a" style="left:1504px;top:143px;" width="14" height="14" viewBox="0 0 14 14" preserveAspectRatio="none"><rect x="0.6" y="0.6" width="12.8" height="12.8" rx="2" fill="#bababa" stroke="#a4a4a4" stroke-width="1.2"/><rect x="1.8" y="1.8" width="10.4" height="10.4" rx="1" fill="none" stroke="#cfcfcf" stroke-width="0.8"/><path d="M4.2 4.2 L9.8 9.8 M9.8 4.2 L4.2 9.8" stroke="#fff" stroke-width="2.1"/></svg>
<div class="t" style="left:1410px;top:131px;font-family:'Liberation Serif';font-size:16px;color:#000;-webkit-text-stroke:0.15px #000;"><span style="display:inline-block;width:8px;text-align:center;">I</span><span style="display:inline-block;width:8px;text-align:center;transform:scaleX(0.624);">m</span><span style="display:inline-block;width:8px;text-align:center;">p</span><span style="display:inline-block;width:8px;text-align:center;">o</span><span style="display:inline-block;width:8px;text-align:center;">r</span><span style="display:inline-block;width:8px;text-align:center;">t</span><span style="display:inline-block;width:8px;text-align:center;">s</span></div>
<div class="a" style="left:1537px;top:137px;width:188px;height:1px;background:#d9d9d9;"></div>
<div class="a" style="left:1725px;top:137px;width:1px;height:26px;background:#d9d9d9;"></div>
<svg class="a" style="left:1552px;top:141px;" width="17" height="17" viewBox="0 0 17 17" preserveAspectRatio="none"><defs><linearGradient id="wg2" x1="0" y1="0" x2="1" y2="0"><stop offset="0" stop-color="#40e8ff"/><stop offset="1" stop-color="#2a30d8"/></linearGradient></defs><rect x="1.6" y="0.6" width="14.3" height="13.8" fill="#f4fdff" stroke="#2a6ad8" stroke-width="1.2"/><rect x="2.2" y="1.2" width="13.1" height="2.2" fill="url(#wg2)"/><rect x="0.6" y="5.6" width="8.8" height="9.8" fill="#fbfdff" stroke="#1a4a8a" stroke-width="1.2"/><path d="M2.6 7.5 H7.4" stroke="#0000a0" stroke-width="1"/><path d="M2.6 9.5 H7.4" stroke="#0000a0" stroke-width="1"/><path d="M2.6 11.5 H7.4" stroke="#0000a0" stroke-width="1"/><path d="M2.6 13.5 H7.4" stroke="#0000a0" stroke-width="1"/><g transform="translate(6.6,0)"><path d="M0.9 4.6 L3.4 6.4 L3.6 4.2 L7.6 7.7 L3.6 11.2 L3.5 9 L1.6 9.2 Z" fill="#30d030" stroke="#003a10" stroke-width="0.9"/></g></svg>
<svg class="a" style="left:1695px;top:143px;" width="14" height="14" viewBox="0 0 14 14" preserveAspectRatio="none"><rect x="0.6" y="0.6" width="12.8" height="12.8" rx="2" fill="#bababa" stroke="#a4a4a4" stroke-width="1.2"/><rect x="1.8" y="1.8" width="10.4" height="10.4" rx="1" fill="none" stroke="#cfcfcf" stroke-width="0.8"/><path d="M4.2 4.2 L9.8 9.8 M9.8 4.2 L4.2 9.8" stroke="#fff" stroke-width="2.1"/></svg>
<div class="t" style="left:1601px;top:131px;font-family:'Liberation Serif';font-size:16px;color:#000;-webkit-text-stroke:0.15px #000;"><span style="display:inline-block;width:8px;text-align:center;transform:scaleX(0.869);">E</span><span style="display:inline-block;width:8px;text-align:center;transform:scaleX(0.966);">x</span><span style="display:inline-block;width:8px;text-align:center;">p</span><span style="display:inline-block;width:8px;text-align:center;">o</span><span style="display:inline-block;width:8px;text-align:center;">r</span><span style="display:inline-block;width:8px;text-align:center;">t</span><span style="display:inline-block;width:8px;text-align:center;">s</span></div>
<div class="a" style="left:387px;top:163px;width:79px;height:668px;background:#ffffff;"></div>
<div class="a" style="left:462px;top:164px;width:4px;height:666px;background:#efefef;"></div>
<div class="a" style="left:466px;top:163px;width:1454px;height:668px;background:#ffffff;box-sizing:border-box;border:1px solid #0078d7;"></div>
<div class="a" style="left:467px;top:404px;width:414px;height:20px;background:#aeaa9f;"></div>
<div class="a" style="left:881px;top:404px;width:1017px;height:20px;background:#e3e3e3;"></div>
<svg class="a" style="left:452px;top:307px;" width="6" height="6" viewBox="0 0 6 6" preserveAspectRatio="none"><circle cx="3" cy="3" r="3" fill="#5ccdfc"/></svg>
<svg class="a" style="left:452px;top:327px;" width="6" height="6" viewBox="0 0 6 6" preserveAspectRatio="none"><circle cx="3" cy="3" r="3" fill="#5ccdfc"/></svg>
<svg class="a" style="left:452px;top:347px;" width="6" height="6" viewBox="0 0 6 6" preserveAspectRatio="none"><circle cx="3" cy="3" r="3" fill="#5ccdfc"/></svg>
<svg class="a" style="left:452px;top:367px;" width="6" height="6" viewBox="0 0 6 6" preserveAspectRatio="none"><circle cx="3" cy="3" r="3" fill="#5ccdfc"/></svg>
<svg class="a" style="left:452px;top:387px;" width="6" height="6" viewBox="0 0 6 6" preserveAspectRatio="none"><circle cx="3" cy="3" r="3" fill="#5ccdfc"/></svg>
<svg class="a" style="left:452px;top:407px;" width="6" height="6" viewBox="0 0 6 6" preserveAspectRatio="none"><circle cx="3" cy="3" r="3" fill="#5ccdfc"/></svg>
<svg class="a" style="left:452px;top:427px;" width="6" height="6" viewBox="0 0 6 6" preserveAspectRatio="none"><circle cx="3" cy="3" r="3" fill="#5ccdfc"/></svg>
<svg class="a" style="left:452px;top:447px;" width="6" height="6" viewBox="0 0 6 6" preserveAspectRatio="none"><circle cx="3" cy="3" r="3" fill="#5ccdfc"/></svg>
<svg class="a" style="left:452px;top:467px;" width="6" height="6" viewBox="0 0 6 6" preserveAspectRatio="none"><circle cx="3" cy="3" r="3" fill="#5ccdfc"/></svg>
<svg class="a" style="left:452px;top:487px;" width="6" height="6" viewBox="0 0 6 6" preserveAspectRatio="none"><circle cx="3" cy="3" r="3" fill="#5ccdfc"/></svg>
<svg class="a" style="left:452px;top:727px;" width="6" height="6" viewBox="0 0 6 6" preserveAspectRatio="none"><circle cx="3" cy="3" r="3" fill="#5ccdfc"/></svg>
<svg class="a" style="left:452px;top:747px;" width="6" height="6" viewBox="0 0 6 6" preserveAspectRatio="none"><circle cx="3" cy="3" r="3" fill="#5ccdfc"/></svg>
<svg class="a" style="left:452px;top:767px;" width="6" height="6" viewBox="0 0 6 6" preserveAspectRatio="none"><circle cx="3" cy="3" r="3" fill="#5ccdfc"/></svg>
<svg class="a" style="left:452px;top:787px;" width="6" height="6" viewBox="0 0 6 6" preserveAspectRatio="none"><circle cx="3" cy="3" r="3" fill="#5ccdfc"/></svg>
<pre class="a" style="left:467px;top:166px;font-family:'Liberation Mono';font-size:16px;letter-spacing:-0.6px;line-height:20px;color:#000"><span style="color:#000000">.text:0804856B</span> <span style="color:#808080">; =============== S U B R O U T I N E =======================================</span>
<span style="color:#000000">.text:0804856B</span>
<span style="color:#000000">.text:0804856B</span> <span style="color:#808080">; Attributes: bp-based frame</span>
<span style="color:#000000">.text:0804856B</span>
<span style="color:#000000">.text:0804856B</span>                 <span style="color:#0000ff">public buffer</span>
<span style="color:#000000">.text:0804856B</span> <span style="color:#0000ff">buffer</span>          <span style="color:#0000ff">proc near</span>
<span style="color:#000000">.text:0804856B</span> <span style="color:#0000ff">; __unwind {</span>
<span style="color:#000000">.text:0804856B</span>                 <span style="color:#000080">push    </span><span style="color:#000080">ebp</span>
<span style="color:#000000">.text:0804856C</span>                 <span style="color:#000080">mov     </span><span style="color:#000080">ebp, esp</span>
<span style="color:#000000">.text:0804856E</span>                 <span style="color:#000080">sub     </span><span style="color:#000080">esp, </span><span style="color:#008000">8</span>
<span style="color:#000000">.text:08048571</span>                 <span style="color:#000080">sub     </span><span style="color:#000080">esp, </span><span style="color:#008000">0Ch</span>
<span style="color:#000000">.text:08048574</span>                 <span style="color:#000080">push    </span><span style="color:#000080">offset command</span>  <span style="color:#808080">; &quot;ls&quot;</span>
<span style="color:#ffffff">.text:08048579</span>                 <span style="color:#ffffff">call    _system</span>
<span style="color:#000000">.text:0804857E</span>                 <span style="color:#000080">add     </span><span style="color:#000080">esp, </span><span style="color:#008000">10h</span>
<span style="color:#000000">.text:08048581</span>                 <span style="color:#000080">nop     </span>
<span style="color:#000000">.text:08048582</span>                 <span style="color:#000080">leave   </span>
<span style="color:#000000">.text:08048583</span>                 <span style="color:#000080">retn    </span>
<span style="color:#000000">.text:08048583</span> <span style="color:#0000ff">; } // starts at 804856B</span>
<span style="color:#000000">.text:08048583</span> <span style="color:#0000ff">buffer</span>          <span style="color:#000080">endp</span>
<span style="color:#000000">.text:08048583</span>
<span style="color:#000000">.text:08048584</span>
<span style="color:#000000">.text:08048584</span> <span style="color:#808080">; =============== S U B R O U T I N E =======================================</span>
<span style="color:#000000">.text:08048584</span>
<span style="color:#000000">.text:08048584</span> <span style="color:#808080">; Attributes: bp-based frame</span>
<span style="color:#000000">.text:08048584</span>
<span style="color:#000000">.text:08048584</span>                 <span style="color:#0000ff">public init</span>
<span style="color:#000000">.text:08048584</span> <span style="color:#0000ff">init</span>            <span style="color:#0000ff">proc near</span>               <span style="color:#008000">; CODE XREF: main+11</span><svg width="9" height="13" style="vertical-align:-2px"><path d="M4.5 0.5 V10.5 M1.5 6.5 L4.5 10.5 L7.5 6.5" fill="none" stroke="#008000" stroke-width="1.2"/></svg><span style="color:#008000">p</span>
<span style="color:#000000">.text:08048584</span> <span style="color:#0000ff">; __unwind {</span>
<span style="color:#000000">.text:08048584</span>                 <span style="color:#000080">push    </span><span style="color:#000080">ebp</span>
<span style="color:#000000">.text:08048585</span>                 <span style="color:#000080">mov     </span><span style="color:#000080">ebp, esp</span>
<span style="color:#000000">.text:08048587</span>                 <span style="color:#000080">sub     </span><span style="color:#000080">esp, </span><span style="color:#008000">8</span>
<span style="color:#000000">.text:0804858A</span>                 <span style="color:#000080">mov     </span><span style="color:#000080">eax, ds:</span><span style="color:#0000ff">stdout@@GLIBC_2_0</span></pre>
<div class="a" style="left:467px;top:808px;width:1432px;height:22px;background:#f0f0f0;"></div>
<div class="t" style="left:469px;top:800px;font-family:'Liberation Serif';font-size:14px;color:#000;-webkit-text-stroke:0.15px #000;"><span style="display:inline-block;width:8.86px;text-align:center;">0</span><span style="display:inline-block;width:8.86px;text-align:center;">0</span><span style="display:inline-block;width:8.86px;text-align:center;">0</span><span style="display:inline-block;width:8.86px;text-align:center;">0</span><span style="display:inline-block;width:8.86px;text-align:center;">0</span><span style="display:inline-block;width:8.86px;text-align:center;">5</span><span style="display:inline-block;width:8.86px;text-align:center;">7</span><span style="display:inline-block;width:8.86px;text-align:center;">9</span></div>
<div class="a" style="left:542px;top:810px;width:1px;height:18px;background:#d0d0d0;"></div>
<div class="t" style="left:547px;top:800px;font-family:'Liberation Serif';font-size:14px;color:#000;-webkit-text-stroke:0.15px #000;"><span style="display:inline-block;width:8.86px;text-align:center;">0</span><span style="display:inline-block;width:8.86px;text-align:center;">8</span><span style="display:inline-block;width:8.86px;text-align:center;">0</span><span style="display:inline-block;width:8.86px;text-align:center;">4</span><span style="display:inline-block;width:8.86px;text-align:center;">8</span><span style="display:inline-block;width:8.86px;text-align:center;">5</span><span style="display:inline-block;width:8.86px;text-align:center;">7</span><span style="display:inline-block;width:8.86px;text-align:center;">9</span><span style="display:inline-block;width:8.86px;text-align:center;">:</span><span style="display:inline-block;width:8.86px">&nbsp;</span><span style="display:inline-block;width:8.86px;text-align:center;">b</span><span style="display:inline-block;width:8.86px;text-align:center;">u</span><span style="display:inline-block;width:8.86px;text-align:center;">f</span><span style="display:inline-block;width:8.86px;text-align:center;">f</span><span style="display:inline-block;width:8.86px;text-align:center;">e</span><span style="display:inline-block;width:8.86px;text-align:center;">r</span><span style="display:inline-block;width:8.86px;text-align:center;">+</span><span style="display:inline-block;width:8.86px;text-align:center;transform:scaleX(0.940);">E</span><span style="display:inline-block;width:8.86px">&nbsp;</span><span style="display:inline-block;width:8.86px;text-align:center;">(</span><span style="display:inline-block;width:8.86px;text-align:center;">S</span><span style="display:inline-block;width:8.86px;text-align:center;">y</span><span style="display:inline-block;width:8.86px;text-align:center;">n</span><span style="display:inline-block;width:8.86px;text-align:center;">c</span><span style="display:inline-block;width:8.86px;text-align:center;">h</span><span style="display:inline-block;width:8.86px;text-align:center;">r</span><span style="display:inline-block;width:8.86px;text-align:center;">o</span><span style="display:inline-block;width:8.86px;text-align:center;">n</span><span style="display:inline-block;width:8.86px;text-align:center;">i</span><span style="display:inline-block;width:8.86px;text-align:center;">z</span><span style="display:inline-block;width:8.86px;text-align:center;">e</span><span style="display:inline-block;width:8.86px;text-align:center;">d</span><span style="display:inline-block;width:8.86px">&nbsp;</span><span style="display:inline-block;width:8.86px;text-align:center;transform:scaleX(0.697);">w</span><span style="display:inline-block;width:8.86px;text-align:center;">i</span><span style="display:inline-block;width:8.86px;text-align:center;">t</span><span style="display:inline-block;width:8.86px;text-align:center;">h</span><span style="display:inline-block;width:8.86px">&nbsp;</span><span style="display:inline-block;width:8.86px;text-align:center;transform:scaleX(0.753);">H</span><span style="display:inline-block;width:8.86px;text-align:center;">e</span><span style="display:inline-block;width:8.86px;text-align:center;">x</span><span style="display:inline-block;width:8.86px">&nbsp;</span><span style="display:inline-block;width:8.86px;text-align:center;transform:scaleX(0.714);">V</span><span style="display:inline-block;width:8.86px;text-align:center;">i</span><span style="display:inline-block;width:8.86px;text-align:center;">e</span><span style="display:inline-block;width:8.86px;text-align:center;transform:scaleX(0.697);">w</span><span style="display:inline-block;width:8.86px;text-align:center;">-</span><span style="display:inline-block;width:8.86px;text-align:center;">1</span><span style="display:inline-block;width:8.86px;text-align:center;">)</span></div>
<div class="a" style="left:986px;top:810px;width:1px;height:18px;background:#d0d0d0;"></div>
<div class="a" style="left:1899px;top:164px;width:20px;height:666px;background:#f0f0f0;"></div>
<svg class="a" style="left:1903px;top:170px;" width="11" height="8" viewBox="0 0 11 8" preserveAspectRatio="none"><path d="M1 7 L5.5 2 L10 7" fill="none" stroke="#555" stroke-width="2"/></svg>
<div class="a" style="left:1899px;top:501px;width:19px;height:22px;background:#cdcdcd;"></div>
<svg class="a" style="left:1903px;top:816px;" width="11" height="8" viewBox="0 0 11 8" preserveAspectRatio="none"><path d="M1 1 L5.5 6 L10 1" fill="none" stroke="#555" stroke-width="2"/></svg>
<div class="a" style="left:0px;top:831px;width:1920px;height:4px;background:#f0f0f0;"></div>
<div class="a" style="left:0px;top:835px;width:1920px;height:26px;background:#f0f0f0;box-sizing:border-box;border:1px solid #a0a0a0;"></div>
<svg class="a" style="left:4px;top:840px;" width="14" height="16" viewBox="0 0 14 16" preserveAspectRatio="none"><rect x="0.5" y="0.5" width="13" height="15" fill="#f4f8ff" stroke="#3a6ab0"/><rect x="1" y="1" width="12" height="2" fill="#2a9ae8"/><path d="M3 5.5 H11 M3 7.5 H11 M3 9.5 H11 M3 11.5 H11 M3 13.5 H11" stroke="#404a60" stroke-width="0.9"/></svg>
<div class="t" style="left:25px;top:830px;font-family:'Liberation Serif';font-size:16px;color:#000;-webkit-text-stroke:0.15px #000;"><span style="display:inline-block;width:8px;text-align:center;transform:scaleX(0.723);">O</span><span style="display:inline-block;width:8px;text-align:center;transform:scaleX(0.984);">u</span><span style="display:inline-block;width:8px;text-align:center;">t</span><span style="display:inline-block;width:8px;text-align:center;">p</span><span style="display:inline-block;width:8px;text-align:center;transform:scaleX(0.984);">u</span><span style="display:inline-block;width:8px;text-align:center;">t</span><span style="display:inline-block;width:8px">&nbsp;</span><span style="display:inline-block;width:8px;text-align:center;transform:scaleX(0.645);">w</span><span style="display:inline-block;width:8px;text-align:center;">i</span><span style="display:inline-block;width:8px;text-align:center;">n</span><span style="display:inline-block;width:8px;text-align:center;">d</span><span style="display:inline-block;width:8px;text-align:center;">o</span><span style="display:inline-block;width:8px;text-align:center;transform:scaleX(0.645);">w</span></div>
<svg class="a" style="left:1848px;top:845px;" width="9" height="9" viewBox="0 0 9 9" preserveAspectRatio="none"><path d="M0 0 H9 V9 H0 Z M1.3 2.2 V7.7 H7.7 V2.2 Z" fill="#000" fill-rule="evenodd"/></svg>
<svg class="a" style="left:1876px;top:845px;" width="9" height="9" viewBox="0 0 9 9" preserveAspectRatio="none"><path d="M2 0 H8 V6 H6 V4.8 H6.8 V2 H3.2 V3 H2 Z" fill="#000"/><path d="M0 3 H6 V9 H0 Z M1.2 4.8 V7.8 H4.8 V4.8 Z" fill="#000" fill-rule="evenodd"/></svg>
<svg class="a" style="left:1902px;top:845px;" width="10" height="9" viewBox="0 0 10 9" preserveAspectRatio="none"><path d="M1 1 L9 8.2 M9 1 L1 8.2" stroke="#000" stroke-width="1.8"/></svg>
<div class="a" style="left:0px;top:863px;width:1920px;height:117px;background:#ffffff;box-sizing:border-box;border:1px solid #828790;"></div>
<div class="a" style="left:1899px;top:864px;width:20px;height:115px;background:#f0f0f0;"></div>
<svg class="a" style="left:1903px;top:870px;" width="11" height="8" viewBox="0 0 11 8" preserveAspectRatio="none"><path d="M1 7 L5.5 2 L10 7" fill="none" stroke="#555" stroke-width="2"/></svg>
<div class="a" style="left:1899px;top:936px;width:19px;height:22px;background:#cdcdcd;"></div>
<svg class="a" style="left:1903px;top:965px;" width="11" height="8" viewBox="0 0 11 8" preserveAspectRatio="none"><path d="M1 1 L5.5 6 L10 1" fill="none" stroke="#555" stroke-width="2"/></svg>
<div class="a" style="left:2px;top:982px;width:62px;height:24px;background:#e1e1e1;box-sizing:border-box;border:1px solid #adadad;"></div>
<div class="t" style="left:21px;top:975px;font-family:'Liberation Serif';font-size:16px;color:#000;-webkit-text-stroke:0.15px #000;"><span style="display:inline-block;width:8px;text-align:center;">I</span><span style="display:inline-block;width:8px;text-align:center;transform:scaleX(0.708);">D</span><span style="display:inline-block;width:8px;text-align:center;transform:scaleX(0.810);">C</span></div>
<div class="a" style="left:68px;top:981px;width:1852px;height:26px;background:#ffffff;box-sizing:border-box;border:1px solid #7a7a7a;"></div>
<svg class="a" style="left:0px;top:937px;" width="18" height="53" viewBox="0 0 18 53" preserveAspectRatio="none"><path d="M0 0 H14 Q18 0 18 4 V49 Q18 53 14 53 H0 Z" fill="#383838" fill-opacity="0.92"/><rect x="6" y="7" width="6" height="1" fill="#8a8a8a"/><rect x="6" y="9" width="6" height="1" fill="#8a8a8a"/><rect x="6" y="11" width="6" height="1" fill="#8a8a8a"/><rect x="6" y="13" width="6" height="1" fill="#8a8a8a"/><rect x="6" y="15" width="6" height="1" fill="#8a8a8a"/><rect x="6" y="17" width="6" height="1" fill="#8a8a8a"/><rect x="6" y="19.5" width="6" height="1" fill="#8a8a8a"/><rect x="6" y="21.5" width="6" height="1" fill="#8a8a8a"/><rect x="6" y="30" width="6" height="1" fill="#8a8a8a"/><rect x="6" y="32" width="6" height="1" fill="#8a8a8a"/><rect x="6" y="34" width="6" height="1" fill="#8a8a8a"/><rect x="6" y="36" width="6" height="1" fill="#8a8a8a"/><rect x="6" y="38" width="6" height="1" fill="#8a8a8a"/><rect x="6" y="40" width="6" height="1" fill="#8a8a8a"/><rect x="6" y="42.5" width="6" height="1" fill="#8a8a8a"/><rect x="6" y="44.5" width="6" height="1" fill="#8a8a8a"/><rect x="6" y="23" width="6" height="1.5" fill="#f0a020"/><rect x="6" y="46" width="6" height="1.5" fill="#70e020"/></svg>
<div class="a" style="left:1px;top:864px;width:1897px;height:115px;overflow:hidden">
<pre class="a" style="left:6px;top:-3px;font-family:'Liberation Mono';font-size:16px;letter-spacing:-0.6px;line-height:20px;color:#000">You may start to explore the input file right now.
Propagating type information...
Function argument information has been propagated
The initial autoanalysis has been finished.
8048584: using guessed type int init(void);
80485DA: using guessed type int vuln(void);</pre>
</div>
<div class="t" style="left:1px;top:1000px;font-family:'Liberation Serif';font-size:13px;color:#000;-webkit-text-stroke:0.35px #000;"><span style="display:inline-block;width:9px;text-align:center;transform:scaleX(0.873);">A</span><span style="display:inline-block;width:9px;text-align:center;transform:scaleX(0.905);">U</span><span style="display:inline-block;width:9px;text-align:center;">:</span><span style="display:inline-block;width:9px">&nbsp;</span><span style="display:inline-block;width:9px">&nbsp;</span><span style="display:inline-block;width:9px;text-align:center;">i</span><span style="display:inline-block;width:9px;text-align:center;">d</span><span style="display:inline-block;width:9px;text-align:center;">l</span><span style="display:inline-block;width:9px;text-align:center;">e</span></div>
<div class="t" style="left:106px;top:1000px;font-family:'Liberation Serif';font-size:13px;color:#000;-webkit-text-stroke:0.35px #000;"><span style="display:inline-block;width:9px;text-align:center;transform:scaleX(0.942);">D</span><span style="display:inline-block;width:9px;text-align:center;">o</span><span style="display:inline-block;width:9px;text-align:center;transform:scaleX(0.858);">w</span><span style="display:inline-block;width:9px;text-align:center;">n</span></div>
<div class="t" style="left:182px;top:1000px;font-family:'Liberation Serif';font-size:13px;color:#000;-webkit-text-stroke:0.35px #000;"><span style="display:inline-block;width:9px;text-align:center;transform:scaleX(0.942);">D</span><span style="display:inline-block;width:9px;text-align:center;">i</span><span style="display:inline-block;width:9px;text-align:center;">s</span><span style="display:inline-block;width:9px;text-align:center;">k</span><span style="display:inline-block;width:9px;text-align:center;">:</span><span style="display:inline-block;width:9px">&nbsp;</span><span style="display:inline-block;width:9px;text-align:center;">3</span><span style="display:inline-block;width:9px;text-align:center;">4</span><span style="display:inline-block;width:9px;text-align:center;transform:scaleX(0.947);">G</span><span style="display:inline-block;width:9px;text-align:center;">B</span></div>
<div class="a" style="left:102px;top:1010px;width:1px;height:18px;background:#d0d0d0;"></div>
<div class="a" style="left:178px;top:1010px;width:1px;height:18px;background:#d0d0d0;"></div>
<div class="a" style="left:274px;top:1010px;width:1px;height:18px;background:#d0d0d0;"></div>
</body></html>
